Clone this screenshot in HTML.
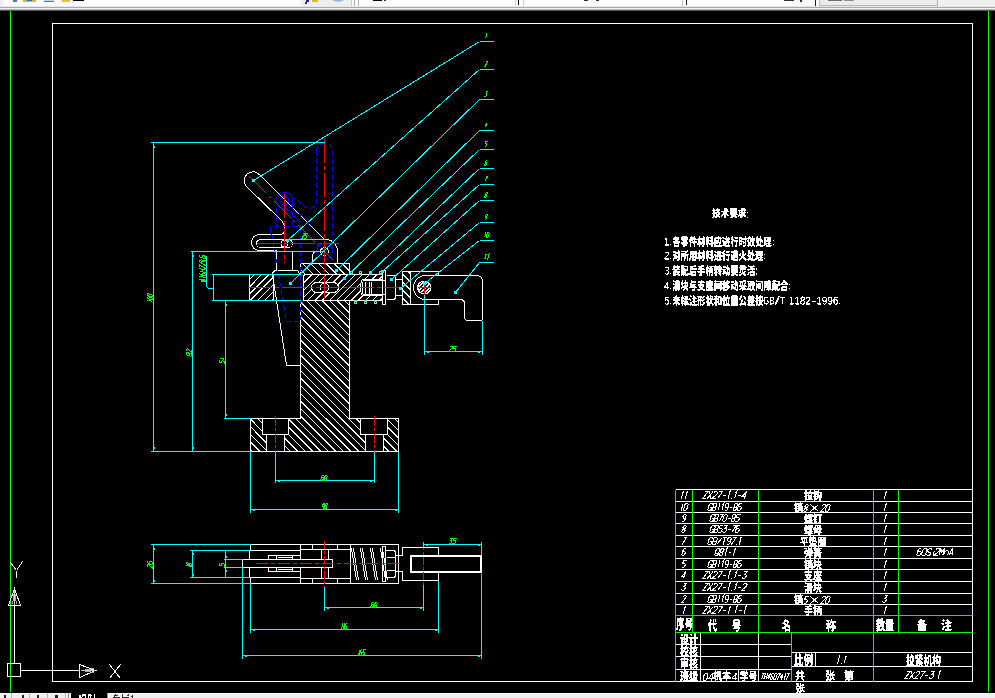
<!DOCTYPE html>
<html><head><meta charset="utf-8"><style>
html,body{margin:0;padding:0;background:#000;width:995px;height:698px;overflow:hidden;font-family:"Liberation Sans",sans-serif}
#top{position:absolute;left:0;top:0;width:995px;height:10px;background:#fdfdfd}
#bot{position:absolute;left:0;top:692px;width:995px;height:6px;background:#f0f0f0}
svg{position:absolute;left:0;top:0}
</style></head><body>
<svg width="995" height="698" viewBox="0 0 995 698" shape-rendering="crispEdges">
<polygon points="52.5,23.5 972.5,23.5 972.5,681.5 52.5,681.5" fill="none" stroke="#ffffff"/><line x1="10.5" y1="10.5" x2="10.5" y2="691.5" stroke="#00ff00"/><line x1="988.5" y1="10.5" x2="988.5" y2="691.5" stroke="#00ff00"/><polygon points="7.5,663.5 20.5,663.5 20.5,676.5 7.5,676.5" fill="none" stroke="#ffffff"/><line x1="14.5" y1="605.5" x2="14.5" y2="663.5" stroke="#ffffff"/><polygon points="8.5,605.5 20.5,605.5 14.5,588.5" fill="none" stroke="#ffffff"/><line x1="14.5" y1="590.5" x2="12.5" y2="604.5" stroke="#aaaaaa"/><line x1="14.5" y1="590.5" x2="16.5" y2="604.5" stroke="#aaaaaa"/><line x1="14.5" y1="590.5" x2="14.5" y2="604.5" stroke="#cccccc"/><line x1="20.5" y1="670.5" x2="79.5" y2="670.5" stroke="#ffffff"/><polygon points="79.5,664.5 79.5,677.5 95.5,670.5" fill="none" stroke="#ffffff"/><line x1="81.5" y1="670.5" x2="94.5" y2="668.5" stroke="#aaaaaa"/><line x1="81.5" y1="670.5" x2="94.5" y2="672.5" stroke="#aaaaaa"/><line x1="81.5" y1="670.5" x2="94.5" y2="670.5" stroke="#cccccc"/><line x1="10.5" y1="562.5" x2="16.5" y2="570.5" stroke="#ffffff"/><line x1="22.5" y1="561.5" x2="16.5" y2="570.5" stroke="#ffffff"/><line x1="16.5" y1="570.5" x2="16.5" y2="577.5" stroke="#ffffff"/><line x1="109.5" y1="664.5" x2="120.5" y2="678.5" stroke="#ffffff"/><line x1="120.5" y1="664.5" x2="109.5" y2="678.5" stroke="#ffffff"/><line x1="675.5" y1="489.5" x2="972.5" y2="489.5" stroke="#ffffff"/><line x1="675.5" y1="501.5" x2="972.5" y2="501.5" stroke="#ffffff"/><line x1="675.5" y1="512.5" x2="972.5" y2="512.5" stroke="#ffffff"/><line x1="675.5" y1="523.5" x2="972.5" y2="523.5" stroke="#ffffff"/><line x1="675.5" y1="535.5" x2="972.5" y2="535.5" stroke="#ffffff"/><line x1="675.5" y1="546.5" x2="972.5" y2="546.5" stroke="#ffffff"/><line x1="675.5" y1="558.5" x2="972.5" y2="558.5" stroke="#ffffff"/><line x1="675.5" y1="569.5" x2="972.5" y2="569.5" stroke="#ffffff"/><line x1="675.5" y1="581.5" x2="972.5" y2="581.5" stroke="#ffffff"/><line x1="675.5" y1="593.5" x2="972.5" y2="593.5" stroke="#ffffff"/><line x1="675.5" y1="604.5" x2="972.5" y2="604.5" stroke="#ffffff"/><line x1="675.5" y1="615.5" x2="972.5" y2="615.5" stroke="#00ff00"/><line x1="675.5" y1="632.5" x2="972.5" y2="632.5" stroke="#00ff00"/><line x1="675.5" y1="644.5" x2="791.5" y2="644.5" stroke="#ffffff"/><line x1="675.5" y1="656.5" x2="791.5" y2="656.5" stroke="#ffffff"/><line x1="675.5" y1="669.5" x2="791.5" y2="669.5" stroke="#ffffff"/><line x1="675.5" y1="681.5" x2="972.5" y2="681.5" stroke="#ffffff"/><line x1="791.5" y1="652.5" x2="972.5" y2="652.5" stroke="#ffffff"/><line x1="791.5" y1="666.5" x2="972.5" y2="666.5" stroke="#ffffff"/><line x1="675.5" y1="489.5" x2="675.5" y2="681.5" stroke="#00ff00"/><line x1="692.5" y1="489.5" x2="692.5" y2="632.5" stroke="#00ff00"/><line x1="758.5" y1="489.5" x2="758.5" y2="632.5" stroke="#00ff00"/><line x1="758.5" y1="632.5" x2="758.5" y2="681.5" stroke="#ffffff"/><line x1="700.5" y1="632.5" x2="700.5" y2="681.5" stroke="#ffffff"/><line x1="738.5" y1="669.5" x2="738.5" y2="681.5" stroke="#ffffff"/><line x1="791.5" y1="632.5" x2="791.5" y2="681.5" stroke="#00ff00"/><line x1="815.5" y1="652.5" x2="815.5" y2="666.5" stroke="#ffffff"/><line x1="873.5" y1="489.5" x2="873.5" y2="681.5" stroke="#00ff00"/><line x1="898.5" y1="489.5" x2="898.5" y2="632.5" stroke="#00ff00"/><rect x="0" y="0" width="995" height="6" fill="#fcfcfc"/><rect x="0" y="0" width="3" height="6" fill="#eeeeee"/><rect x="301" y="0" width="50" height="7" fill="#eeeeee"/><rect x="351" y="0" width="1" height="7" fill="#c8c8c8"/><rect x="354" y="0" width="1" height="7" fill="#b0b0b0"/><rect x="358" y="0" width="1" height="7" fill="#b0b0b0"/><rect x="820" y="0" width="117" height="5" fill="#ebebeb"/><rect x="820" y="5" width="117" height="1" fill="#b8b8b8"/><rect x="937" y="0" width="1" height="6" fill="#b0b0b0"/><rect x="819" y="0" width="1" height="6" fill="#c0c0c0"/><rect x="815" y="0" width="1" height="6" fill="#202020"/><rect x="938" y="0" width="57" height="7" fill="#f0f0f0"/><rect x="0" y="6" width="995" height="1" fill="#e4e7ec"/><rect x="0" y="7" width="995" height="1" fill="#a8a8a8"/><rect x="0" y="8" width="995" height="1" fill="#f4f4f4"/><rect x="0" y="9" width="995" height="1" fill="#b0b0b0"/><rect x="0" y="10" width="995" height="1" fill="#5a5a5a"/><rect x="13" y="0" width="4" height="2" fill="#6a7088"/><rect x="23" y="0" width="13" height="2" fill="#d8b830"/><rect x="27" y="0" width="5" height="1" fill="#3070c0"/><rect x="44" y="0" width="10" height="1" fill="#c8d4e8"/><rect x="44" y="1" width="10" height="1" fill="#5a78b0"/><rect x="62" y="0" width="8" height="2" fill="#d8c820"/><rect x="73" y="0" width="11" height="1" fill="#000000"/><rect x="306" y="0" width="3" height="2" fill="#1e2e78"/><rect x="305" y="2" width="2" height="2" fill="#1e2e78"/><rect x="312" y="0" width="6" height="2" fill="#d8c000"/><rect x="333" y="0" width="10" height="1" fill="#90b8e0"/><rect x="335" y="1" width="6" height="1" fill="#b8d0e8"/><rect x="373" y="0" width="9" height="1" fill="#000000"/><rect x="384" y="0" width="2" height="1" fill="#303030"/><rect x="518" y="0" width="1" height="5" fill="#000000"/><rect x="515" y="0" width="1" height="6" fill="#d0d0d0"/><rect x="523" y="0" width="1" height="6" fill="#d0d0d0"/><rect x="584" y="0" width="4" height="1" fill="#303030"/><rect x="596" y="0" width="3" height="1" fill="#303030"/><rect x="682" y="0" width="1" height="6" fill="#c8c8c8"/><rect x="686" y="0" width="1" height="5" fill="#202020"/><rect x="784" y="0" width="10" height="1" fill="#303030"/><rect x="800" y="0" width="2" height="2" fill="#303030"/><rect x="828" y="0" width="14" height="1" fill="#707070"/><rect x="844" y="0" width="10" height="1" fill="#909090"/><rect x="0" y="693" width="995" height="5" fill="#efefef"/><rect x="0" y="693" width="995" height="1" fill="#fafafa"/><rect x="11" y="693" width="1" height="5" fill="#b8b8b8"/><rect x="29" y="693" width="1" height="5" fill="#b8b8b8"/><rect x="47" y="693" width="1" height="5" fill="#b8b8b8"/><rect x="65" y="693" width="1" height="5" fill="#b8b8b8"/><rect x="4" y="695" width="2" height="3" fill="#202020"/><rect x="22" y="695" width="2" height="3" fill="#202020"/><rect x="37" y="695" width="2" height="3" fill="#202020"/><rect x="55" y="695" width="3" height="3" fill="#202020"/><rect x="68" y="693" width="1" height="5" fill="#909090"/><rect x="70" y="693" width="1" height="5" fill="#ffffff"/><rect x="71" y="692" width="36" height="6" fill="#000000"/><rect x="107" y="693" width="1" height="5" fill="#909090"/><rect x="108" y="693" width="1" height="5" fill="#ffffff"/><clipPath id="h105"><polygon points="250,418 398,418 398,451 250,451"/></clipPath><path clip-path="url(#h105)" d="M401.3 418L434.3 451M393.7 418L426.7 451M386.1 418L419.1 451M378.5 418L411.5 451M370.9 418L403.9 451M363.3 418L396.3 451M355.7 418L388.7 451M348.1 418L381.1 451M340.5 418L373.5 451M332.9 418L365.9 451M325.3 418L358.3 451M317.7 418L350.7 451M310.1 418L343.1 451M302.5 418L335.5 451M294.9 418L327.9 451M287.3 418L320.3 451M279.7 418L312.7 451M272.1 418L305.1 451M264.5 418L297.5 451M256.9 418L289.9 451M249.3 418L282.3 451M241.7 418L274.7 451M234.1 418L267.1 451M226.5 418L259.5 451M218.9 418L251.9 451" stroke="#ffffff" fill="none"/><clipPath id="h107"><polygon points="300,300 349,300 349,418 300,418"/></clipPath><path clip-path="url(#h107)" d="M351.7 300L469.7 418M344.1 300L462.1 418M336.5 300L454.5 418M328.9 300L446.9 418M321.3 300L439.3 418M313.7 300L431.7 418M306.1 300L424.1 418M298.5 300L416.5 418M290.9 300L408.9 418M283.3 300L401.3 418M275.7 300L393.7 418M268.1 300L386.1 418M260.5 300L378.5 418M252.9 300L370.9 418M245.3 300L363.3 418M237.7 300L355.7 418M230.1 300L348.1 418M222.5 300L340.5 418M214.9 300L332.9 418M207.3 300L325.3 418M199.7 300L317.7 418M192.1 300L310.1 418M184.5 300L302.5 418" stroke="#ffffff" fill="none"/><clipPath id="h109"><polygon points="300,263 349,263 349,274 300,274"/></clipPath><path clip-path="url(#h109)" d="M357.3 263L368.3 274M349.4 263L360.4 274M341.5 263L352.5 274M333.6 263L344.6 274M325.7 263L336.7 274M317.8 263L328.8 274M309.9 263L320.9 274M302 263L313 274M294.1 263L305.1 274" stroke="#ffffff" fill="none"/><clipPath id="h111"><polygon points="303,274 382,274 382,300 303,300"/></clipPath><path clip-path="url(#h111)" d="M298.3 274L272.3 300M305.5 274L279.5 300M312.7 274L286.7 300M319.9 274L293.9 300M327.1 274L301.1 300M334.3 274L308.3 300M341.5 274L315.5 300M348.7 274L322.7 300M355.9 274L329.9 300M363.1 274L337.1 300M370.3 274L344.3 300M377.5 274L351.5 300M384.7 274L358.7 300M391.9 274L365.9 300M399.1 274L373.1 300M406.3 274L380.3 300" stroke="#ffffff" fill="none"/><clipPath id="h113"><polygon points="249,274 273,274 273,300 249,300"/></clipPath><path clip-path="url(#h113)" d="M247.9 274L221.9 300M255.1 274L229.1 300M262.3 274L236.3 300M269.5 274L243.5 300M276.7 274L250.7 300M283.9 274L257.9 300M291.1 274L265.1 300M298.3 274L272.3 300" stroke="#ffffff" fill="none"/><clipPath id="h115"><polygon points="402,271 410,271 410,304 402,304"/></clipPath><path clip-path="url(#h115)" d="M415.5 271L448.5 304M407.5 271L440.5 304M399.5 271L432.5 304M391.5 271L424.5 304M383.5 271L416.5 304M375.5 271L408.5 304" stroke="#ffffff" fill="none"/><rect x="262" y="418" width="27" height="17" fill="#000"/><rect x="266" y="434" width="19" height="18" fill="#000"/><rect x="360" y="418" width="28" height="17" fill="#000"/><rect x="365" y="434" width="19" height="18" fill="#000"/><rect x="360" y="279" width="23" height="17" fill="#000"/><path d="M316 282H333A5 5 0 0 1 333 292H316A5 5 0 0 1 316 282Z" fill="#000" stroke="none"/><circle cx="324.5" cy="251.5" r="8" fill="none" stroke="#0000ff"/><polyline points="300.5,418.5 250.5,418.5 250.5,451.5 398.5,451.5 398.5,418.5 349.5,418.5" fill="none" stroke="#ffffff"/><polyline points="262.5,418.5 262.5,434.5 288.5,434.5 288.5,418.5" fill="none" stroke="#ffffff"/><line x1="266.5" y1="434.5" x2="266.5" y2="451.5" stroke="#ffffff"/><line x1="284.5" y1="434.5" x2="284.5" y2="451.5" stroke="#ffffff"/><polyline points="360.5,418.5 360.5,434.5 387.5,434.5 387.5,418.5" fill="none" stroke="#ffffff"/><line x1="365.5" y1="434.5" x2="365.5" y2="451.5" stroke="#ffffff"/><line x1="383.5" y1="434.5" x2="383.5" y2="451.5" stroke="#ffffff"/><line x1="300.5" y1="300.5" x2="300.5" y2="418.5" stroke="#ffffff"/><line x1="349.5" y1="300.5" x2="349.5" y2="418.5" stroke="#ffffff"/><polyline points="300.5,274.5 300.5,263.5 349.5,263.5 349.5,274.5" fill="none" stroke="#ffffff"/><line x1="303.5" y1="274.5" x2="382.5" y2="274.5" stroke="#ffffff"/><line x1="303.5" y1="300.5" x2="382.5" y2="300.5" stroke="#ffffff"/><line x1="303.5" y1="274.5" x2="303.5" y2="300.5" stroke="#ffffff"/><path d="M382.5 279.5H363.5Q360.5 279.5 360.5 287.5Q360.5 295.5 363.5 295.5H382.5" fill="none" stroke="#ffffff"/><line x1="362.5" y1="280.5" x2="385.5" y2="280.5" stroke="#ffffff"/><line x1="362.5" y1="294.5" x2="385.5" y2="294.5" stroke="#ffffff"/><line x1="362.5" y1="281.5" x2="362.5" y2="293.5" stroke="#ffffff"/><line x1="365.5" y1="281.5" x2="365.5" y2="293.5" stroke="#ffffff"/><line x1="369.5" y1="281.5" x2="369.5" y2="293.5" stroke="#ffffff"/><line x1="371.5" y1="281.5" x2="371.5" y2="293.5" stroke="#ffffff"/><path d="M316.5 282.5H333.5A5 5 0 0 1 333.5 292.5H316.5A5 5 0 0 1 316.5 282.5Z" fill="none" stroke="#ffffff"/><circle cx="324.5" cy="287.5" r="4.5" fill="none" stroke="#ffffff"/><line x1="249.5" y1="274.5" x2="249.5" y2="300.5" stroke="#ffffff"/><line x1="273.5" y1="274.5" x2="273.5" y2="300.5" stroke="#ffffff"/><line x1="249.5" y1="274.5" x2="273.5" y2="274.5" stroke="#ffffff"/><line x1="249.5" y1="300.5" x2="273.5" y2="300.5" stroke="#ffffff"/><polygon points="382.5,270.5 385.5,270.5 385.5,304.5 382.5,304.5" fill="none" stroke="#ffffff"/><path d="M386.5 275.5H393.5Q395.5 275.5 395.5 278.5V296.5Q395.5 299.5 393.5 299.5H386.5" fill="none" stroke="#ffffff"/><polyline points="395.5,279.5 402.5,279.5" fill="none" stroke="#ffffff"/><polyline points="395.5,295.5 402.5,295.5" fill="none" stroke="#ffffff"/><polyline points="438.5,275.5 438.5,271.5 402.5,271.5 402.5,304.5 438.5,304.5 438.5,299.5" fill="none" stroke="#ffffff"/><line x1="410.5" y1="271.5" x2="410.5" y2="304.5" stroke="#ffffff"/><path d="M438.5 275.5H476.5Q482.5 275.5 482.5 281.5V319.5Q482.5 320.5 480.5 320.5H468.5Q464.5 320.5 464.5 316.5V303.5Q464.5 299.5 460.5 299.5H425.5A12 12 0 0 1 425.5 275.5H438.5" fill="none" stroke="#ffffff"/><circle cx="424.5" cy="287.5" r="6.5" fill="none" stroke="#ffffff"/><clipPath id="h158"><polygon points="430,287 429.638,289.052 428.596,290.857 427,292.196 425.042,292.909 422.958,292.909 421,292.196 419.404,290.857 418.362,289.052 418,287 418.362,284.948 419.404,283.143 421,281.804 422.958,281.091 425.042,281.091 427,281.804 428.596,283.143 429.638,284.948"/></clipPath><path clip-path="url(#h158)" d="M416.409 281.091L404.591 292.909M420.409 281.091L408.591 292.909M424.409 281.091L412.591 292.909M428.409 281.091L416.591 292.909M432.409 281.091L420.591 292.909M436.409 281.091L424.591 292.909M440.409 281.091L428.591 292.909" stroke="#ffffff" fill="none"/><path d="M417.5 287.5A6.5 6.5 0 1 0 430.5 287.5A6.5 6.5 0 1 0 417.5 287.5" fill="none" stroke="#ffffff"/><path d="M272.5 274.5Q272.5 270.5 276.5 270.5H296.5Q298.5 270.5 299.5 274.5" fill="none" stroke="#ffffff"/><polyline points="272.5,274.5 286.5,365.5 300.5,365.5" fill="none" stroke="#ffffff"/><line x1="276.5" y1="251.5" x2="276.5" y2="270.5" stroke="#ffffff"/><line x1="292.5" y1="251.5" x2="292.5" y2="270.5" stroke="#ffffff"/><path d="M284.5 229.5Q284.5 234.5 279.5 234.5H259.5A8 8 0 0 0 259.5 250.5H276.5" fill="none" stroke="#ffffff"/><path d="M260.5 239.5H288.5A4 4 0 0 1 288.5 247.5H260.5A4 4 0 0 1 260.5 239.5Z" fill="none" stroke="#ffffff"/><circle cx="284.5" cy="243.5" r="3.5" fill="none" stroke="#ffffff"/><path d="M246.8 186.8A8.7 8.7 0 1 1 259.2 174.4L324.5 239.5A12 12 0 0 1 337.5 251.5V263.5" fill="none" stroke="#ffffff"/><polyline points="246.8,186.8 282.5,221.5 284.5,226.5 284.5,229.5" fill="none" stroke="#ffffff"/><path d="M312.5 263.5V256.5Q312.5 251.5 316.5 251.5" fill="none" stroke="#ffffff"/><circle cx="324.5" cy="251.5" r="4" fill="none" stroke="#ffffff"/><circle cx="284.5" cy="200.5" r="8.5" fill="none" stroke="#0000ff"/><circle cx="284.5" cy="200.5" r="4.5" fill="none" stroke="#0000ff"/><polyline points="270.5,226.5 286.5,321.5 300.5,321.5" fill="none" stroke="#0000ff" stroke-dasharray="5,3"/><line x1="300.5" y1="226.5" x2="300.5" y2="321.5" stroke="#0000ff" stroke-dasharray="5,3"/><line x1="276.5" y1="207.5" x2="276.5" y2="226.5" stroke="#0000ff" stroke-dasharray="5,3"/><line x1="292.5" y1="203.5" x2="292.5" y2="226.5" stroke="#0000ff" stroke-dasharray="5,3"/><polyline points="270.5,232.5 270.5,226.5 297.5,226.5 297.5,230.5" fill="none" stroke="#0000ff" stroke-dasharray="6,3"/><polyline points="293.5,210.5 308.5,220.5 308.5,225.5" fill="none" stroke="#0000ff" stroke-dasharray="5,2"/><line x1="287.5" y1="209.5" x2="303.5" y2="226.5" stroke="#0000ff" stroke-dasharray="5,2"/><path d="M316.5 150.5Q316.5 143.5 324.5 143.5Q332.5 143.5 332.5 150.5V251.5" fill="none" stroke="#0000ff" stroke-dasharray="5,3"/><path d="M332.5 251.5A8 8 0 0 1 316.5 251.5" fill="none" stroke="#0000ff"/><path d="M316.5 150.5V200.5Q316.5 208.5 307.5 208.5L294.5 198.5" fill="none" stroke="#0000ff" stroke-dasharray="5,3"/><line x1="324.5" y1="138.5" x2="324.5" y2="300.5" stroke="#ff0000" stroke-dasharray="24,3,4,3"/><line x1="284.5" y1="193.5" x2="284.5" y2="262.5" stroke="#ff0000" stroke-dasharray="24,3,4,3"/><line x1="249.5" y1="176.5" x2="333.5" y2="260.5" stroke="#ff0000" stroke-dasharray="24,3,4,3"/><line x1="256.5" y1="243.5" x2="338.5" y2="243.5" stroke="#ff0000" stroke-dasharray="24,3,4,3"/><line x1="247.5" y1="287.5" x2="402.5" y2="287.5" stroke="#ff0000" stroke-dasharray="24,3,4,3"/><line x1="417.5" y1="287.5" x2="431.5" y2="287.5" stroke="#ff0000"/><line x1="424.5" y1="280.5" x2="424.5" y2="294.5" stroke="#ff0000"/><line x1="275.5" y1="415.5" x2="275.5" y2="451.5" stroke="#ff0000" stroke-dasharray="10,2,3,2"/><line x1="374.5" y1="415.5" x2="374.5" y2="451.5" stroke="#ff0000" stroke-dasharray="10,2,3,2"/><rect x="350" y="271" width="3" height="4" fill="#80e0a0"/><rect x="351" y="272" width="1" height="1" fill="#000"/><rect x="359" y="271" width="3" height="4" fill="#80e0a0"/><rect x="360" y="272" width="1" height="1" fill="#000"/><rect x="369" y="271" width="3" height="4" fill="#80e0a0"/><rect x="370" y="272" width="1" height="1" fill="#000"/><rect x="379" y="271" width="3" height="4" fill="#80e0a0"/><rect x="380" y="272" width="1" height="1" fill="#000"/><rect x="354" y="300" width="3" height="4" fill="#80e0a0"/><rect x="355" y="302" width="1" height="1" fill="#000"/><rect x="364" y="300" width="3" height="4" fill="#80e0a0"/><rect x="365" y="302" width="1" height="1" fill="#000"/><rect x="374" y="300" width="3" height="4" fill="#80e0a0"/><rect x="375" y="302" width="1" height="1" fill="#000"/><line x1="150.5" y1="142.5" x2="324.5" y2="142.5" stroke="#00ffff"/><line x1="153.5" y1="142.5" x2="153.5" y2="451.5" stroke="#00ffff"/><rect x="153" y="146" width="2" height="2" fill="#00ffff"/><rect x="153" y="447" width="2" height="2" fill="#00ffff"/><line x1="150.5" y1="451.5" x2="250.5" y2="451.5" stroke="#00ffff"/><line x1="190.5" y1="251.5" x2="324.5" y2="251.5" stroke="#00ffff"/><line x1="192.5" y1="251.5" x2="192.5" y2="451.5" stroke="#00ffff"/><rect x="192" y="255" width="2" height="2" fill="#00ffff"/><rect x="192" y="447" width="2" height="2" fill="#00ffff"/><line x1="211.5" y1="274.5" x2="300.5" y2="274.5" stroke="#00ffff"/><line x1="211.5" y1="300.5" x2="300.5" y2="300.5" stroke="#00ffff"/><line x1="213.5" y1="274.5" x2="213.5" y2="300.5" stroke="#00ffff"/><line x1="206.5" y1="255.5" x2="206.5" y2="286.5" stroke="#00ffff"/><polyline points="206.5,286.5 208.5,288.5 213.5,288.5" fill="none" stroke="#00ffff"/><line x1="225.5" y1="300.5" x2="225.5" y2="418.5" stroke="#00ffff"/><rect x="225" y="304" width="2" height="2" fill="#00ffff"/><rect x="225" y="414" width="2" height="2" fill="#00ffff"/><line x1="223.5" y1="418.5" x2="250.5" y2="418.5" stroke="#00ffff"/><line x1="275.5" y1="451.5" x2="275.5" y2="482.5" stroke="#00ffff"/><line x1="374.5" y1="451.5" x2="374.5" y2="482.5" stroke="#00ffff"/><line x1="275.5" y1="480.5" x2="374.5" y2="480.5" stroke="#00ffff"/><rect x="278" y="480" width="2" height="2" fill="#00ffff"/><rect x="370" y="480" width="2" height="2" fill="#00ffff"/><line x1="250.5" y1="451.5" x2="250.5" y2="512.5" stroke="#00ffff"/><line x1="398.5" y1="451.5" x2="398.5" y2="512.5" stroke="#00ffff"/><line x1="250.5" y1="509.5" x2="398.5" y2="509.5" stroke="#00ffff"/><rect x="253" y="509" width="2" height="2" fill="#00ffff"/><rect x="395" y="509" width="2" height="2" fill="#00ffff"/><line x1="424.5" y1="294.5" x2="424.5" y2="354.5" stroke="#00ffff"/><line x1="482.5" y1="320.5" x2="482.5" y2="354.5" stroke="#00ffff"/><line x1="424.5" y1="351.5" x2="482.5" y2="351.5" stroke="#00ffff"/><rect x="427" y="351" width="2" height="2" fill="#00ffff"/><rect x="478" y="351" width="2" height="2" fill="#00ffff"/><line x1="284.5" y1="239.5" x2="324.5" y2="239.5" stroke="#00ffff"/><line x1="479.5" y1="41.5" x2="493.5" y2="41.5" stroke="#00ffff"/><line x1="479.5" y1="41.5" x2="253.5" y2="180.5" stroke="#00ffff"/><rect x="252" y="179" width="3" height="3" fill="#00ffff"/><line x1="479.5" y1="69.5" x2="493.5" y2="69.5" stroke="#00ffff"/><line x1="479.5" y1="69.5" x2="287.5" y2="240.5" stroke="#00ffff"/><rect x="286" y="239" width="3" height="3" fill="#00ffff"/><line x1="479.5" y1="99.5" x2="493.5" y2="99.5" stroke="#00ffff"/><line x1="479.5" y1="99.5" x2="290.5" y2="283.5" stroke="#00ffff"/><rect x="289" y="282" width="3" height="3" fill="#00ffff"/><line x1="479.5" y1="130.5" x2="493.5" y2="130.5" stroke="#00ffff"/><line x1="479.5" y1="130.5" x2="336.5" y2="270.5" stroke="#00ffff"/><rect x="335" y="269" width="3" height="3" fill="#00ffff"/><line x1="479.5" y1="149.5" x2="493.5" y2="149.5" stroke="#00ffff"/><line x1="479.5" y1="149.5" x2="344.5" y2="278.5" stroke="#00ffff"/><rect x="343" y="277" width="3" height="3" fill="#00ffff"/><line x1="479.5" y1="168.5" x2="493.5" y2="168.5" stroke="#00ffff"/><line x1="479.5" y1="168.5" x2="370.5" y2="272.5" stroke="#00ffff"/><rect x="369" y="271" width="3" height="3" fill="#00ffff"/><line x1="479.5" y1="184.5" x2="493.5" y2="184.5" stroke="#00ffff"/><line x1="479.5" y1="184.5" x2="382.5" y2="271.5" stroke="#00ffff"/><rect x="381" y="270" width="3" height="3" fill="#00ffff"/><line x1="479.5" y1="200.5" x2="493.5" y2="200.5" stroke="#00ffff"/><line x1="479.5" y1="200.5" x2="391.5" y2="279.5" stroke="#00ffff"/><rect x="390" y="278" width="3" height="3" fill="#00ffff"/><line x1="479.5" y1="222.5" x2="493.5" y2="222.5" stroke="#00ffff"/><line x1="479.5" y1="222.5" x2="400.5" y2="288.5" stroke="#00ffff"/><rect x="399" y="287" width="3" height="3" fill="#00ffff"/><line x1="479.5" y1="240.5" x2="493.5" y2="240.5" stroke="#00ffff"/><line x1="479.5" y1="240.5" x2="424.5" y2="283.5" stroke="#00ffff"/><rect x="423" y="282" width="3" height="3" fill="#00ffff"/><line x1="479.5" y1="262.5" x2="493.5" y2="262.5" stroke="#00ffff"/><line x1="479.5" y1="262.5" x2="455.5" y2="292.5" stroke="#00ffff"/><rect x="454" y="291" width="3" height="3" fill="#00ffff"/><line x1="250.5" y1="544.5" x2="398.5" y2="544.5" stroke="#ffffff"/><line x1="250.5" y1="583.5" x2="398.5" y2="583.5" stroke="#ffffff"/><line x1="398.5" y1="544.5" x2="398.5" y2="583.5" stroke="#ffffff"/><line x1="250.5" y1="544.5" x2="250.5" y2="550.5" stroke="#ffffff"/><line x1="250.5" y1="577.5" x2="250.5" y2="583.5" stroke="#ffffff"/><line x1="249.5" y1="550.5" x2="300.5" y2="550.5" stroke="#ffffff"/><line x1="249.5" y1="577.5" x2="300.5" y2="577.5" stroke="#ffffff"/><line x1="249.5" y1="550.5" x2="249.5" y2="559.5" stroke="#ffffff"/><line x1="249.5" y1="567.5" x2="249.5" y2="577.5" stroke="#ffffff"/><polygon points="242.5,559.5 332.5,559.5 332.5,567.5 242.5,567.5" fill="none" stroke="#ffffff"/><line x1="300.5" y1="544.5" x2="300.5" y2="559.5" stroke="#ffffff"/><line x1="300.5" y1="567.5" x2="300.5" y2="583.5" stroke="#ffffff"/><line x1="300.5" y1="549.5" x2="349.5" y2="549.5" stroke="#ffffff"/><line x1="300.5" y1="578.5" x2="349.5" y2="578.5" stroke="#ffffff"/><line x1="312.5" y1="544.5" x2="312.5" y2="549.5" stroke="#ffffff"/><line x1="312.5" y1="578.5" x2="312.5" y2="583.5" stroke="#ffffff"/><line x1="337.5" y1="544.5" x2="337.5" y2="549.5" stroke="#ffffff"/><line x1="337.5" y1="578.5" x2="337.5" y2="583.5" stroke="#ffffff"/><line x1="321.5" y1="549.5" x2="321.5" y2="559.5" stroke="#ffffff"/><line x1="328.5" y1="549.5" x2="328.5" y2="559.5" stroke="#ffffff"/><line x1="321.5" y1="567.5" x2="321.5" y2="578.5" stroke="#ffffff"/><line x1="328.5" y1="567.5" x2="328.5" y2="578.5" stroke="#ffffff"/><polyline points="268.5,559.5 268.5,555.5 300.5,555.5" fill="none" stroke="#ffffff"/><polyline points="268.5,567.5 268.5,571.5 300.5,571.5" fill="none" stroke="#ffffff"/><line x1="276.5" y1="555.5" x2="276.5" y2="559.5" stroke="#ffffff"/><line x1="292.5" y1="555.5" x2="292.5" y2="559.5" stroke="#ffffff"/><line x1="276.5" y1="567.5" x2="276.5" y2="571.5" stroke="#ffffff"/><line x1="292.5" y1="567.5" x2="292.5" y2="571.5" stroke="#ffffff"/><line x1="277.5" y1="557.5" x2="291.5" y2="557.5" stroke="#ffffff"/><line x1="277.5" y1="569.5" x2="291.5" y2="569.5" stroke="#ffffff"/><line x1="350.5" y1="544.5" x2="350.5" y2="583.5" stroke="#ffffff"/><line x1="351.5" y1="548.5" x2="356.5" y2="580.5" stroke="#ffffff"/><line x1="353.5" y1="548.5" x2="358.5" y2="580.5" stroke="#ffffff"/><line x1="360.5" y1="548.5" x2="365.5" y2="580.5" stroke="#ffffff"/><line x1="362.5" y1="548.5" x2="367.5" y2="580.5" stroke="#ffffff"/><line x1="370.5" y1="548.5" x2="375.5" y2="580.5" stroke="#ffffff"/><line x1="372.5" y1="548.5" x2="377.5" y2="580.5" stroke="#ffffff"/><line x1="380.5" y1="548.5" x2="385.5" y2="580.5" stroke="#ffffff"/><line x1="382.5" y1="548.5" x2="387.5" y2="580.5" stroke="#ffffff"/><polygon points="382.5,546.5 385.5,546.5 385.5,581.5 382.5,581.5" fill="none" stroke="#ffffff"/><path d="M385.5 550.5H393.5Q395.5 550.5 395.5 553.5V574.5Q395.5 577.5 393.5 577.5H385.5" fill="none" stroke="#ffffff"/><line x1="386.5" y1="557.5" x2="395.5" y2="557.5" stroke="#ffffff"/><line x1="386.5" y1="570.5" x2="395.5" y2="570.5" stroke="#ffffff"/><polyline points="395.5,555.5 402.5,555.5" fill="none" stroke="#ffffff"/><polyline points="395.5,571.5 402.5,571.5" fill="none" stroke="#ffffff"/><polyline points="402.5,555.5 402.5,547.5 438.5,547.5 438.5,555.5" fill="none" stroke="#ffffff"/><polyline points="402.5,571.5 402.5,580.5 438.5,580.5 438.5,572.5" fill="none" stroke="#ffffff"/><polygon points="410.5,555.5 481.5,555.5 481.5,572.5 410.5,572.5" fill="none" stroke="#ffffff"/><polygon points="411.5,556.5 480.5,556.5 480.5,571.5 411.5,571.5" fill="none" stroke="#ffffff"/><line x1="324.5" y1="540.5" x2="324.5" y2="586.5" stroke="#ff0000" stroke-dasharray="8,2,3,2"/><line x1="423.5" y1="541.5" x2="423.5" y2="584.5" stroke="#ff0000" stroke-dasharray="8,2,3,2"/><line x1="255.5" y1="563.5" x2="400.5" y2="563.5" stroke="#ff0000" stroke-dasharray="12,3,4,3"/><line x1="150.5" y1="544.5" x2="250.5" y2="544.5" stroke="#00ffff"/><line x1="150.5" y1="583.5" x2="250.5" y2="583.5" stroke="#00ffff"/><line x1="153.5" y1="544.5" x2="153.5" y2="583.5" stroke="#00ffff"/><rect x="153" y="548" width="2" height="2" fill="#00ffff"/><rect x="153" y="580" width="2" height="2" fill="#00ffff"/><line x1="189.5" y1="550.5" x2="249.5" y2="550.5" stroke="#00ffff"/><line x1="189.5" y1="577.5" x2="249.5" y2="577.5" stroke="#00ffff"/><line x1="192.5" y1="550.5" x2="192.5" y2="577.5" stroke="#00ffff"/><rect x="192" y="553" width="2" height="2" fill="#00ffff"/><rect x="192" y="574" width="2" height="2" fill="#00ffff"/><line x1="223.5" y1="559.5" x2="242.5" y2="559.5" stroke="#00ffff"/><line x1="223.5" y1="567.5" x2="242.5" y2="567.5" stroke="#00ffff"/><line x1="225.5" y1="550.5" x2="225.5" y2="577.5" stroke="#00ffff"/><rect x="225" y="556" width="2" height="2" fill="#00ffff"/><rect x="225" y="570" width="2" height="2" fill="#00ffff"/><line x1="250.5" y1="583.5" x2="250.5" y2="632.5" stroke="#00ffff"/><line x1="242.5" y1="567.5" x2="242.5" y2="658.5" stroke="#00ffff"/><line x1="324.5" y1="586.5" x2="324.5" y2="610.5" stroke="#00ffff"/><line x1="423.5" y1="584.5" x2="423.5" y2="610.5" stroke="#00ffff"/><line x1="324.5" y1="607.5" x2="423.5" y2="607.5" stroke="#00ffff"/><rect x="327" y="607" width="2" height="2" fill="#00ffff"/><rect x="420" y="607" width="2" height="2" fill="#00ffff"/><line x1="438.5" y1="580.5" x2="438.5" y2="632.5" stroke="#00ffff"/><line x1="250.5" y1="629.5" x2="438.5" y2="629.5" stroke="#00ffff"/><rect x="253" y="629" width="2" height="2" fill="#00ffff"/><rect x="435" y="629" width="2" height="2" fill="#00ffff"/><line x1="481.5" y1="573.5" x2="481.5" y2="658.5" stroke="#00ffff"/><line x1="481.5" y1="541.5" x2="481.5" y2="554.5" stroke="#00ffff"/><line x1="242.5" y1="655.5" x2="481.5" y2="655.5" stroke="#00ffff"/><rect x="245" y="655" width="2" height="2" fill="#00ffff"/><rect x="478" y="655" width="2" height="2" fill="#00ffff"/><line x1="423.5" y1="541.5" x2="423.5" y2="547.5" stroke="#00ffff"/><line x1="423.5" y1="544.5" x2="481.5" y2="544.5" stroke="#00ffff"/><rect x="426" y="544" width="2" height="2" fill="#00ffff"/><rect x="478" y="544" width="2" height="2" fill="#00ffff"/><path d="M148.33 300.73L147.50 299.96L152.50 301.46M147.50 298.14L147.50 297.10L148.33 296.83L151.67 297.83L152.50 298.60L152.50 299.64L151.67 299.91L148.33 298.91L147.50 298.14M147.50 295.06L147.50 294.02L148.33 293.75L151.67 294.75L152.50 295.52L152.50 296.56L151.67 296.83L148.33 295.83L147.50 295.06" fill="none" stroke="#00ff00"/><path d="M186.50 354.31L186.50 352.94L187.33 352.50L188.17 352.75L189.00 353.69L189.00 355.06L188.17 355.50L187.33 355.25L186.50 354.31M189.00 355.06L189.00 353.69L189.83 353.25L190.67 353.50L191.50 354.44L191.50 355.81L190.67 356.25L189.83 356.00L189.00 355.06M187.33 351.50L186.50 350.56L186.50 349.19L187.33 348.75L188.17 349.00L191.50 352.75L191.50 350.00" fill="none" stroke="#00ff00"/><path d="M219.50 359.88L219.50 362.00L221.58 362.62L221.58 361.04L222.42 360.76L223.67 361.13L224.50 361.91L224.50 363.50M220.33 358.60L219.50 357.82L224.50 359.32" fill="none" stroke="#00ff00"/><path d="M201.00 280.53L201.00 279.29L202.00 278.96L204.00 279.56L205.00 280.49L205.00 281.73L204.00 282.05L202.00 281.45L201.00 280.53M199.50 279.08L205.50 281.63M200.50 276.89L199.50 275.97L205.50 277.77M199.50 272.55L199.50 273.80L200.50 274.72L204.50 275.92L205.50 275.60L205.50 274.35L204.50 273.43L203.00 272.98L202.00 273.30L202.00 275.17M199.50 270.93L205.50 272.73M199.50 268.44L205.50 270.24M202.50 271.83L202.50 269.34M199.50 267.44L199.50 264.96L205.50 268.62M199.50 261.47L205.50 265.76M199.50 260.47L205.50 262.27M201.50 259.21L204.00 261.82M203.10 260.93L205.50 260.41M199.50 255.12L199.50 256.36L200.50 257.29L204.50 258.49L205.50 258.16L205.50 256.92L204.50 256.00L203.00 255.55L202.00 255.87L202.00 257.74" fill="none" stroke="#00ff00"/><path d="M323.69 475.50L322.56 475.50L321.75 476.33L320.75 479.67L321.06 480.50L322.19 480.50L323.00 479.67L323.37 478.42L323.06 477.58L321.38 477.58M325.81 475.50L326.94 475.50L327.25 476.33L327.00 477.17L326.19 478.00L325.06 478.00L324.75 477.17L325.00 476.33L325.81 475.50M325.06 478.00L326.19 478.00L326.50 478.83L326.25 479.67L325.44 480.50L324.31 480.50L324.00 479.67L324.25 478.83L325.06 478.00" fill="none" stroke="#00ff00"/><path d="M324.00 506.50L322.80 506.50L322.70 505.50L323.00 504.50L323.70 503.50L324.50 503.50L324.60 504.50L323.40 508.50L322.70 509.50L321.90 509.50M326.30 503.50L327.10 503.50L327.20 504.50L326.00 508.50L325.30 509.50L324.50 509.50L324.40 508.50L325.60 504.50L326.30 503.50" fill="none" stroke="#00ff00"/><path d="M449.75 347.33L450.69 346.50L452.06 346.50L452.50 347.33L452.25 348.17L448.50 351.50L451.25 351.50M456.50 346.50L453.75 346.50L453.12 348.58L455.19 348.58L455.62 349.42L455.25 350.67L454.31 351.50L452.25 351.50" fill="none" stroke="#00ff00"/><path d="M302.75 234.33L303.44 233.50L304.31 233.50L304.50 234.33L304.25 235.17L301.50 238.50L303.25 238.50M307.50 233.50L305.75 233.50L305.12 235.58L306.44 235.58L306.62 236.42L306.25 237.67L305.56 238.50L304.25 238.50" fill="none" stroke="#00ff00"/><path d="M148.33 567.25L147.50 566.31L147.50 564.94L148.33 564.50L149.17 564.75L152.50 568.50L152.50 565.75M147.50 561.19L147.50 562.56L148.33 563.50L151.67 564.50L152.50 564.06L152.50 562.69L151.67 561.75L150.42 561.38L149.58 561.81L149.58 563.88" fill="none" stroke="#00ff00"/><path d="M187.33 565.84L186.50 565.18L191.50 566.68M186.50 563.74L186.50 562.91L187.33 562.75L188.17 563.00L189.00 563.66L189.00 564.49L188.17 564.65L187.33 564.40L186.50 563.74M189.00 564.49L189.00 563.66L189.83 563.50L190.67 563.75L191.50 564.41L191.50 565.24L190.67 565.40L189.83 565.15L189.00 564.49" fill="none" stroke="#00ff00"/><path d="M219.50 562.50L219.50 565.00L221.58 565.62L221.58 563.75L222.42 563.38L223.67 563.75L224.50 564.63L224.50 566.50" fill="none" stroke="#00ff00"/><path d="M450.00 538.50L452.75 538.50L450.75 540.58L451.44 540.58L451.87 541.42L451.50 542.67L450.56 543.50L449.19 543.50L448.75 542.67M456.50 538.50L453.75 538.50L453.12 540.58L455.19 540.58L455.62 541.42L455.25 542.67L454.31 543.50L452.25 543.50" fill="none" stroke="#00ff00"/><path d="M373.69 602.50L372.56 602.50L371.75 603.33L370.75 606.67L371.06 607.50L372.19 607.50L373.00 606.67L373.37 605.42L373.06 604.58L371.38 604.58M375.81 602.50L376.94 602.50L377.25 603.33L377.00 604.17L376.19 605.00L375.06 605.00L374.75 604.17L375.00 603.33L375.81 602.50M375.06 605.00L376.19 605.00L376.50 605.83L376.25 606.67L375.44 607.50L374.31 607.50L374.00 606.67L374.25 605.83L375.06 605.00" fill="none" stroke="#00ff00"/><path d="M342.40 624.50L343.10 623.50L341.30 629.50M344.20 624.50L344.90 623.50L343.10 629.50M347.10 623.50L346.30 623.50L345.60 624.50L344.40 628.50L344.50 629.50L345.30 629.50L346.00 628.50L346.45 627.00L346.35 626.00L345.15 626.00" fill="none" stroke="#00ff00"/><path d="M359.42 650.50L360.13 649.50L358.33 655.50M362.42 649.50L361.59 649.50L360.87 650.50L359.67 654.50L359.79 655.50L360.62 655.50L361.34 654.50L361.79 653.00L361.67 652.00L360.42 652.00M365.50 649.50L363.84 649.50L363.09 652.00L364.33 652.00L364.45 653.00L364.00 654.50L363.28 655.50L362.04 655.50" fill="none" stroke="#00ff00"/><path d="M486.31 34.33L487.11 33.50L485.61 38.50" fill="none" stroke="#00ff00"/><path d="M485.75 62.33L486.37 61.50L487.12 61.50L487.25 62.33L487.00 63.17L484.50 66.50L486.00 66.50" fill="none" stroke="#00ff00"/><path d="M486.00 91.50L487.50 91.50L486.12 93.58L486.50 93.58L486.62 94.42L486.25 95.67L485.62 96.50L484.87 96.50L484.75 95.67" fill="none" stroke="#00ff00"/><path d="M485.62 127.50L487.12 122.50L485.00 125.83L486.50 125.83" fill="none" stroke="#00ff00"/><path d="M487.50 141.50L486.00 141.50L485.38 143.58L486.50 143.58L486.62 144.42L486.25 145.67L485.62 146.50L484.50 146.50" fill="none" stroke="#00ff00"/><path d="M487.12 160.50L486.37 160.50L485.75 161.33L484.75 164.67L484.87 165.50L485.62 165.50L486.25 164.67L486.62 163.42L486.50 162.58L485.38 162.58" fill="none" stroke="#00ff00"/><path d="M486.00 176.50L487.50 176.50L484.87 181.50" fill="none" stroke="#00ff00"/><path d="M486.37 192.50L487.12 192.50L487.25 193.33L487.00 194.17L486.37 195.00L485.62 195.00L485.50 194.17L485.75 193.33L486.37 192.50M485.62 195.00L486.37 195.00L486.50 195.83L486.25 196.67L485.62 197.50L484.87 197.50L484.75 196.67L485.00 195.83L485.62 195.00" fill="none" stroke="#00ff00"/><path d="M486.75 217.00L485.62 217.00L485.50 216.17L485.75 215.33L486.37 214.50L487.12 214.50L487.25 215.33L486.25 218.67L485.62 219.50L484.87 219.50" fill="none" stroke="#00ff00"/><path d="M485.28 233.33L486.06 232.50L484.56 237.50M487.91 232.50L488.97 232.50L489.25 233.33L488.25 236.67L487.47 237.50L486.41 237.50L486.13 236.67L487.13 233.33L487.91 232.50" fill="none" stroke="#00ff00"/><path d="M485.36 255.33L486.22 254.50L484.72 259.50M488.11 255.33L488.97 254.50L487.47 259.50" fill="none" stroke="#00ff00"/><path d="M682.13 492.67L683.36 491.50L681.26 498.50M686.08 492.67L687.31 491.50L685.21 498.50" fill="none" stroke="#ffffff"/><path d="M704.60 491.50L708.34 491.50L702.50 498.50L706.24 498.50M709.34 491.50L710.97 498.50M713.07 491.50L707.24 498.50M713.72 492.67L715.01 491.50L716.88 491.50L717.46 492.67L717.11 493.83L711.97 498.50L715.71 498.50M718.81 491.50L722.55 491.50L717.64 498.50M722.96 495.00L725.77 495.00M728.87 492.67L730.15 491.50L728.05 498.50M731.46 498.03L731.32 498.50M735.41 492.67L736.69 491.50L734.59 498.50M738.44 495.00L741.25 495.00M744.47 498.50L746.57 491.50L742.36 496.17L746.10 496.17" fill="none" stroke="#ffffff"/><path d="M885.12 492.67L886.33 491.50L884.23 498.50" fill="none" stroke="#ffffff"/><path d="M682.06 504.67L683.22 503.50L681.12 510.50M686.06 503.50L687.69 503.50L688.15 504.67L686.75 509.33L685.59 510.50L683.96 510.50L683.50 509.33L684.90 504.67L686.06 503.50" fill="none" stroke="#ffffff"/><path d="M712.63 504.67L712.14 503.50L710.45 503.50L709.25 504.67L707.85 509.33L708.35 510.50L710.04 510.50L711.23 509.33L711.93 507.00L710.24 507.00M712.93 507.00L715.47 507.00L716.66 505.83L717.01 504.67L716.52 503.50L713.98 503.50L711.88 510.50L714.42 510.50L715.61 509.33L715.96 508.17L715.47 507.00M718.86 504.67L720.05 503.50L717.95 510.50M722.66 504.67L723.86 503.50L721.76 510.50M728.30 507.00L725.77 507.00L725.27 505.83L725.62 504.67L726.82 503.50L728.51 503.50L729.00 504.67L727.60 509.33L726.41 510.50L724.72 510.50M729.73 507.00L732.26 507.00M735.58 503.50L737.27 503.50L737.77 504.67L737.42 505.83L736.22 507.00L734.53 507.00L734.04 505.83L734.39 504.67L735.58 503.50M734.53 507.00L736.22 507.00L736.72 508.17L736.37 509.33L735.17 510.50L733.48 510.50L732.99 509.33L733.34 508.17L734.53 507.00M741.65 503.50L739.96 503.50L738.77 504.67L737.37 509.33L737.86 510.50L739.55 510.50L740.75 509.33L741.27 507.58L740.78 506.42L738.24 506.42" fill="none" stroke="#ffffff"/><path d="M806.32 504.50L807.77 504.50L808.15 505.67L807.80 506.83L806.72 508.00L805.27 508.00L804.90 506.83L805.25 505.67L806.32 504.50M805.27 508.00L806.72 508.00L807.10 509.17L806.75 510.33L805.67 511.50L804.22 511.50L803.85 510.33L804.20 509.17L805.27 508.00" fill="none" stroke="#ffffff"/><line x1="810.5" y1="504.5" x2="818.5" y2="511.5" stroke="#ffffff"/><line x1="818.5" y1="504.5" x2="810.5" y2="511.5" stroke="#ffffff"/><path d="M822.25 505.67L823.46 504.50L825.19 504.50L825.70 505.67L825.35 506.83L820.50 511.50L823.95 511.50M827.91 504.50L829.64 504.50L830.15 505.67L828.75 510.33L827.54 511.50L825.81 511.50L825.30 510.33L826.70 505.67L827.91 504.50" fill="none" stroke="#ffffff"/><path d="M885.12 504.67L886.33 503.50L884.23 510.50" fill="none" stroke="#ffffff"/><path d="M685.45 518.00L683.27 518.00L682.90 516.83L683.25 515.67L684.32 514.50L685.77 514.50L686.15 515.67L684.75 520.33L683.67 521.50L682.22 521.50" fill="none" stroke="#ffffff"/><path d="M714.52 515.67L714.05 514.50L712.42 514.50L711.25 515.67L709.85 520.33L710.32 521.50L711.95 521.50L713.12 520.33L713.82 518.00L712.19 518.00M714.82 518.00L717.27 518.00L718.44 516.83L718.79 515.67L718.32 514.50L715.87 514.50L713.77 521.50L716.22 521.50L717.39 520.33L717.74 519.17L717.27 518.00M720.14 514.50L723.41 514.50L718.86 521.50M725.23 514.50L726.87 514.50L727.34 515.67L725.94 520.33L724.77 521.50L723.13 521.50L722.66 520.33L724.06 515.67L725.23 514.50M728.04 518.00L730.50 518.00M733.77 514.50L735.41 514.50L735.88 515.67L735.53 516.83L734.36 518.00L732.72 518.00L732.26 516.83L732.61 515.67L733.77 514.50M732.72 518.00L734.36 518.00L734.83 519.17L734.48 520.33L733.31 521.50L731.67 521.50L731.21 520.33L731.56 519.17L732.72 518.00M740.50 514.50L737.23 514.50L736.35 517.42L738.81 517.42L739.27 518.58L738.75 520.33L737.58 521.50L735.13 521.50" fill="none" stroke="#ffffff"/><path d="M885.12 515.67L886.33 514.50L884.23 521.50" fill="none" stroke="#ffffff"/><path d="M684.32 525.50L685.77 525.50L686.15 526.67L685.80 527.83L684.72 529.00L683.27 529.00L682.90 527.83L683.25 526.67L684.32 525.50M683.27 529.00L684.72 529.00L685.10 530.17L684.75 531.33L683.67 532.50L682.22 532.50L681.85 531.33L682.20 530.17L683.27 529.00" fill="none" stroke="#ffffff"/><path d="M714.52 526.67L714.05 525.50L712.42 525.50L711.25 526.67L709.85 531.33L710.32 532.50L711.95 532.50L713.12 531.33L713.82 529.00L712.19 529.00M714.82 529.00L717.27 529.00L718.44 527.83L718.79 526.67L718.32 525.50L715.87 525.50L713.77 532.50L716.22 532.50L717.39 531.33L717.74 530.17L717.27 529.00M723.41 525.50L720.14 525.50L719.27 528.42L721.72 528.42L722.19 529.58L721.66 531.33L720.50 532.50L718.04 532.50M724.41 525.50L727.69 525.50L725.17 528.42L725.99 528.42L726.46 529.58L725.94 531.33L724.77 532.50L723.13 532.50L722.66 531.33M728.04 529.00L730.50 529.00M732.96 525.50L736.23 525.50L731.67 532.50M739.68 525.50L738.05 525.50L736.88 526.67L735.48 531.33L735.95 532.50L737.58 532.50L738.75 531.33L739.27 529.58L738.81 528.42L736.35 528.42" fill="none" stroke="#ffffff"/><path d="M885.12 526.67L886.33 525.50L884.23 532.50" fill="none" stroke="#ffffff"/><path d="M683.60 537.50L686.50 537.50L682.22 544.50" fill="none" stroke="#ffffff"/><path d="M712.85 538.67L712.30 537.50L710.50 537.50L709.25 538.67L707.85 543.33L708.40 544.50L710.20 544.50L711.45 543.33L712.15 541.00L710.35 541.00M713.15 541.00L715.85 541.00L717.10 539.83L717.45 538.67L716.90 537.50L714.20 537.50L712.10 544.50L714.80 544.50L716.05 543.33L716.40 542.17L715.85 541.00M722.40 537.50L716.70 544.50M723.40 537.50L727.00 537.50M725.20 537.50L723.10 544.50M730.55 541.00L727.85 541.00L727.30 539.83L727.65 538.67L728.90 537.50L730.70 537.50L731.25 538.67L729.85 543.33L728.60 544.50L726.80 544.50M732.60 537.50L736.20 537.50L731.40 544.50M736.14 544.03L736.00 544.50M740.00 538.67L741.25 537.50L739.15 544.50" fill="none" stroke="#ffffff"/><path d="M885.12 538.67L886.33 537.50L884.23 544.50" fill="none" stroke="#ffffff"/><path d="M685.77 548.50L684.32 548.50L683.25 549.67L681.85 554.33L682.22 555.50L683.67 555.50L684.75 554.33L685.27 552.58L684.90 551.42L682.73 551.42" fill="none" stroke="#ffffff"/><path d="M717.45 548.50L719.16 548.50L719.66 549.67L718.26 554.33L717.06 555.50L715.35 555.50L714.85 554.33L716.25 549.67L717.45 548.50M716.90 553.17L717.91 555.50M721.86 548.50L723.57 548.50L724.07 549.67L723.72 550.83L722.52 552.00L720.81 552.00L720.31 550.83L720.66 549.67L721.86 548.50M720.81 552.00L722.52 552.00L723.02 553.17L722.67 554.33L721.47 555.50L719.76 555.50L719.26 554.33L719.61 553.17L720.81 552.00M725.92 549.67L727.12 548.50L725.02 555.50M728.63 552.00L731.19 552.00M734.17 549.67L735.37 548.50L733.27 555.50" fill="none" stroke="#ffffff"/><path d="M885.12 549.67L886.33 548.50L884.23 555.50" fill="none" stroke="#ffffff"/><path d="M686.50 560.50L683.60 560.50L682.73 563.42L684.90 563.42L685.27 564.58L684.75 566.33L683.67 567.50L681.50 567.50" fill="none" stroke="#ffffff"/><path d="M712.63 561.67L712.14 560.50L710.45 560.50L709.25 561.67L707.85 566.33L708.35 567.50L710.04 567.50L711.23 566.33L711.93 564.00L710.24 564.00M712.93 564.00L715.47 564.00L716.66 562.83L717.01 561.67L716.52 560.50L713.98 560.50L711.88 567.50L714.42 567.50L715.61 566.33L715.96 565.17L715.47 564.00M718.86 561.67L720.05 560.50L717.95 567.50M722.66 561.67L723.86 560.50L721.76 567.50M728.30 564.00L725.77 564.00L725.27 562.83L725.62 561.67L726.82 560.50L728.51 560.50L729.00 561.67L727.60 566.33L726.41 567.50L724.72 567.50M729.73 564.00L732.26 564.00M735.58 560.50L737.27 560.50L737.77 561.67L737.42 562.83L736.22 564.00L734.53 564.00L734.04 562.83L734.39 561.67L735.58 560.50M734.53 564.00L736.22 564.00L736.72 565.17L736.37 566.33L735.17 567.50L733.48 567.50L732.99 566.33L733.34 565.17L734.53 564.00M741.65 560.50L739.96 560.50L738.77 561.67L737.37 566.33L737.86 567.50L739.55 567.50L740.75 566.33L741.27 564.58L740.78 563.42L738.24 563.42" fill="none" stroke="#ffffff"/><path d="M885.12 561.67L886.33 560.50L884.23 567.50" fill="none" stroke="#ffffff"/><path d="M683.67 578.50L685.77 571.50L682.20 576.17L685.10 576.17" fill="none" stroke="#ffffff"/><path d="M704.60 571.50L708.34 571.50L702.50 578.50L706.24 578.50M709.34 571.50L710.97 578.50M713.07 571.50L707.24 578.50M713.72 572.67L715.01 571.50L716.88 571.50L717.46 572.67L717.11 573.83L711.97 578.50L715.71 578.50M718.81 571.50L722.55 571.50L717.64 578.50M722.96 575.00L725.77 575.00M728.87 572.67L730.15 571.50L728.05 578.50M731.46 578.03L731.32 578.50M735.41 572.67L736.69 571.50L734.59 578.50M738.44 575.00L741.25 575.00M743.76 571.50L747.50 571.50L744.76 574.42L745.69 574.42L746.27 575.58L745.75 577.33L744.47 578.50L742.60 578.50L742.01 577.33" fill="none" stroke="#ffffff"/><path d="M885.12 572.67L886.33 571.50L884.23 578.50" fill="none" stroke="#ffffff"/><path d="M683.60 583.50L686.50 583.50L684.17 586.42L684.90 586.42L685.27 587.58L684.75 589.33L683.67 590.50L682.22 590.50L681.85 589.33" fill="none" stroke="#ffffff"/><path d="M704.60 583.50L708.34 583.50L702.50 590.50L706.24 590.50M709.34 583.50L710.97 590.50M713.07 583.50L707.24 590.50M713.72 584.67L715.01 583.50L716.88 583.50L717.46 584.67L717.11 585.83L711.97 590.50L715.71 590.50M718.81 583.50L722.55 583.50L717.64 590.50M722.96 587.00L725.77 587.00M728.87 584.67L730.15 583.50L728.05 590.50M731.46 590.03L731.32 590.50M735.41 584.67L736.69 583.50L734.59 590.50M738.44 587.00L741.25 587.00M743.41 584.67L744.70 583.50L746.57 583.50L747.15 584.67L746.80 585.83L741.66 590.50L745.40 590.50" fill="none" stroke="#ffffff"/><path d="M885.12 584.67L886.33 583.50L884.23 590.50" fill="none" stroke="#ffffff"/><path d="M683.25 596.67L684.32 595.50L685.77 595.50L686.15 596.67L685.80 597.83L681.50 602.50L684.40 602.50" fill="none" stroke="#ffffff"/><path d="M712.63 596.67L712.14 595.50L710.45 595.50L709.25 596.67L707.85 601.33L708.35 602.50L710.04 602.50L711.23 601.33L711.93 599.00L710.24 599.00M712.93 599.00L715.47 599.00L716.66 597.83L717.01 596.67L716.52 595.50L713.98 595.50L711.88 602.50L714.42 602.50L715.61 601.33L715.96 600.17L715.47 599.00M718.86 596.67L720.05 595.50L717.95 602.50M722.66 596.67L723.86 595.50L721.76 602.50M728.30 599.00L725.77 599.00L725.27 597.83L725.62 596.67L726.82 595.50L728.51 595.50L729.00 596.67L727.60 601.33L726.41 602.50L724.72 602.50M729.73 599.00L732.26 599.00M735.58 595.50L737.27 595.50L737.77 596.67L737.42 597.83L736.22 599.00L734.53 599.00L734.04 597.83L734.39 596.67L735.58 595.50M734.53 599.00L736.22 599.00L736.72 600.17L736.37 601.33L735.17 602.50L733.48 602.50L732.99 601.33L733.34 600.17L734.53 599.00M741.65 595.50L739.96 595.50L738.77 596.67L737.37 601.33L737.86 602.50L739.55 602.50L740.75 601.33L741.27 599.58L740.78 598.42L738.24 598.42" fill="none" stroke="#ffffff"/><path d="M808.50 596.50L805.60 596.50L804.73 599.42L806.90 599.42L807.27 600.58L806.75 602.33L805.67 603.50L803.50 603.50" fill="none" stroke="#ffffff"/><line x1="810.5" y1="596.5" x2="818.5" y2="603.5" stroke="#ffffff"/><line x1="818.5" y1="596.5" x2="810.5" y2="603.5" stroke="#ffffff"/><path d="M822.25 597.67L823.46 596.50L825.19 596.50L825.70 597.67L825.35 598.83L820.50 603.50L823.95 603.50M827.91 596.50L829.64 596.50L830.15 597.67L828.75 602.33L827.54 603.50L825.81 603.50L825.30 602.33L826.70 597.67L827.91 596.50" fill="none" stroke="#ffffff"/><path d="M884.60 595.50L887.50 595.50L885.17 598.42L885.90 598.42L886.27 599.58L885.75 601.33L884.67 602.50L883.22 602.50L882.85 601.33" fill="none" stroke="#ffffff"/><path d="M684.12 607.67L685.33 606.50L683.23 613.50" fill="none" stroke="#ffffff"/><path d="M704.60 606.50L708.39 606.50L702.50 613.50L706.29 613.50M709.39 606.50L711.08 613.50M713.18 606.50L707.29 613.50M713.83 607.67L715.13 606.50L717.02 606.50L717.62 607.67L717.27 608.83L712.08 613.50L715.87 613.50M718.97 606.50L722.76 606.50L717.82 613.50M723.18 610.00L726.03 610.00M729.15 607.67L730.44 606.50L728.34 613.50M731.80 613.03L731.66 613.50M735.78 607.67L737.08 606.50L734.98 613.50M738.87 610.00L741.71 610.00M744.83 607.67L746.13 606.50L744.03 613.50" fill="none" stroke="#ffffff"/><path d="M885.12 607.67L886.33 606.50L884.23 613.50" fill="none" stroke="#ffffff"/><path d="M921.49 548.50L919.56 548.50L918.25 549.67L916.85 554.33L917.46 555.50L919.39 555.50L920.71 554.33L921.23 552.58L920.62 551.42L917.73 551.42M924.42 548.50L926.35 548.50L926.97 549.67L925.57 554.33L924.25 555.50L922.32 555.50L921.71 554.33L923.11 549.67L924.42 548.50M931.82 549.67L931.21 548.50L929.28 548.50L927.97 549.67L927.62 550.83L928.23 552.00L930.16 552.00L930.77 553.17L930.42 554.33L929.11 555.50L927.18 555.50L926.57 554.33M934.40 550.83L933.00 555.50M935.10 548.50L934.86 549.32M935.72 549.67L937.03 548.50L938.96 548.50L939.58 549.67L939.23 550.83L933.97 555.50L937.83 555.50M938.83 555.50L940.93 548.50L941.80 552.00L944.78 548.50L942.68 555.50M945.08 550.83L943.68 555.50M944.73 552.00L946.05 550.83L947.98 550.83L948.59 552.00L947.54 555.50M948.54 555.50L952.57 548.50L952.40 555.50M950.21 553.17L952.14 553.17" fill="none" stroke="#ffffff"/><path d="M762.30 673.50L764.51 673.50M763.41 673.50L761.61 679.50M765.51 673.50L763.71 679.50M767.73 673.50L765.93 679.50M764.61 676.50L766.83 676.50M768.59 679.50L770.39 673.50L767.53 677.50L769.74 677.50M773.60 673.50L772.49 673.50L771.64 674.50L770.44 678.50L770.69 679.50L771.80 679.50L772.65 678.50L773.10 677.00L772.85 676.00L771.19 676.00M775.71 673.50L776.82 673.50L777.07 674.50L775.87 678.50L775.02 679.50L773.91 679.50L773.65 678.50L774.85 674.50L775.71 673.50M778.37 673.50L780.58 673.50L777.12 679.50M781.44 679.50L783.24 673.50L780.38 677.50L782.60 677.50M785.05 674.50L785.90 673.50L784.10 679.50M787.29 673.50L789.50 673.50L786.04 679.50" fill="none" stroke="#ffffff"/><path d="M838.98 656.83L839.86 655.50L837.46 663.50M842.80 657.63L842.64 658.17M841.20 662.97L841.04 663.50M845.43 656.83L846.31 655.50L843.91 663.50" fill="none" stroke="#ffffff"/><path d="M906.60 671.50L910.46 671.50L904.50 678.50L908.36 678.50M911.46 671.50L913.22 678.50M915.32 671.50L909.36 678.50M915.97 672.67L917.28 671.50L919.21 671.50L919.82 672.67L919.47 673.83L914.22 678.50L918.07 678.50M921.17 671.50L925.03 671.50L920.04 678.50M925.46 675.00L928.36 675.00M930.89 671.50L934.75 671.50L931.94 674.42L932.91 674.42L933.52 675.58L933.00 677.33L931.68 678.50L929.75 678.50L929.14 677.33M934.75 678.03L934.61 678.50M938.77 672.67L940.09 671.50L937.99 678.50" fill="none" stroke="#ffffff"/><path d="M713 208h1v1h-1zM717 208h1v1h-1zM724 208h3v1h-3zM730 208h7v1h-7zM741 208h4v1h-4zM713 209h2v1h-2zM716 209h4v1h-4zM724 209h4v1h-4zM730 209h7v1h-7zM741 209h5v1h-5zM712 210h8v1h-8zM724 210h4v1h-4zM730 210h7v1h-7zM738 210h8v1h-8zM713 211h2v1h-2zM717 211h2v1h-2zM721 211h8v1h-8zM730 211h7v1h-7zM739 211h1v1h-1zM741 211h2v1h-2zM744 211h1v1h-1zM713 212h7v1h-7zM723 212h4v1h-4zM730 212h7v1h-7zM739 212h7v1h-7zM747 212h1v1h-1zM712 213h5v1h-5zM718 213h2v1h-2zM723 213h4v1h-4zM730 213h7v1h-7zM739 213h1v1h-1zM741 213h4v1h-4zM713 214h2v1h-2zM716 214h4v1h-4zM722 214h6v1h-6zM730 214h8v1h-8zM739 214h6v1h-6zM713 215h2v1h-2zM716 215h3v1h-3zM721 215h2v1h-2zM724 215h2v1h-2zM727 215h2v1h-2zM731 215h5v1h-5zM738 215h8v1h-8zM713 216h7v1h-7zM721 216h1v1h-1zM724 216h2v1h-2zM731 216h6v1h-6zM738 216h1v1h-1zM740 216h3v1h-3zM744 216h2v1h-2zM712 217h2v1h-2zM715 217h2v1h-2zM719 217h1v1h-1zM724 217h2v1h-2zM730 217h3v1h-3zM735 217h2v1h-2zM740 217h2v1h-2zM747 217h1v1h-1zM675 236h1v1h-1zM682 236h5v1h-5zM691 236h1v1h-1zM694 236h1v1h-1zM699 236h1v1h-1zM703 236h1v1h-1zM707 236h1v1h-1zM711 236h2v1h-2zM718 236h1v1h-1zM726 236h1v1h-1zM732 236h1v1h-1zM745 236h1v1h-1zM749 236h1v1h-1zM752 236h1v1h-1zM757 236h1v1h-1zM760 236h1v1h-1zM674 237h5v1h-5zM681 237h7v1h-7zM690 237h5v1h-5zM699 237h1v1h-1zM703 237h2v1h-2zM706 237h7v1h-7zM715 237h6v1h-6zM722 237h2v1h-2zM726 237h1v1h-1zM728 237h1v1h-1zM731 237h2v1h-2zM734 237h4v1h-4zM739 237h3v1h-3zM745 237h1v1h-1zM748 237h3v1h-3zM752 237h1v1h-1zM756 237h2v1h-2zM760 237h1v1h-1zM764 237h7v1h-7zM665 238h2v1h-2zM673 238h6v1h-6zM681 238h7v1h-7zM690 238h6v1h-6zM698 238h7v1h-7zM706 238h3v1h-3zM710 238h3v1h-3zM714 238h8v1h-8zM723 238h7v1h-7zM731 238h2v1h-2zM735 238h3v1h-3zM739 238h16v1h-16zM756 238h5v1h-5zM764 238h2v1h-2zM767 238h4v1h-4zM665 239h2v1h-2zM673 239h6v1h-6zM681 239h7v1h-7zM689 239h16v1h-16zM706 239h3v1h-3zM711 239h2v1h-2zM714 239h2v1h-2zM718 239h1v1h-1zM720 239h1v1h-1zM725 239h5v1h-5zM731 239h3v1h-3zM739 239h1v1h-1zM741 239h6v1h-6zM748 239h1v1h-1zM750 239h5v1h-5zM756 239h6v1h-6zM764 239h2v1h-2zM767 239h4v1h-4zM666 240h1v1h-1zM675 240h3v1h-3zM682 240h5v1h-5zM689 240h4v1h-4zM694 240h1v1h-1zM698 240h2v1h-2zM702 240h3v1h-3zM706 240h7v1h-7zM714 240h5v1h-5zM720 240h1v1h-1zM722 240h2v1h-2zM726 240h3v1h-3zM732 240h6v1h-6zM739 240h3v1h-3zM745 240h1v1h-1zM747 240h2v1h-2zM750 240h5v1h-5zM756 240h7v1h-7zM764 240h7v1h-7zM773 240h1v1h-1zM666 241h1v1h-1zM673 241h7v1h-7zM683 241h4v1h-4zM689 241h2v1h-2zM692 241h5v1h-5zM698 241h3v1h-3zM702 241h3v1h-3zM706 241h3v1h-3zM710 241h3v1h-3zM714 241h5v1h-5zM720 241h1v1h-1zM722 241h8v1h-8zM731 241h2v1h-2zM734 241h4v1h-4zM739 241h5v1h-5zM745 241h1v1h-1zM747 241h2v1h-2zM750 241h4v1h-4zM756 241h3v1h-3zM760 241h3v1h-3zM764 241h7v1h-7zM666 242h1v1h-1zM673 242h7v1h-7zM681 242h7v1h-7zM690 242h7v1h-7zM698 242h7v1h-7zM706 242h3v1h-3zM711 242h10v1h-10zM723 242h7v1h-7zM731 242h2v1h-2zM736 242h1v1h-1zM739 242h1v1h-1zM741 242h1v1h-1zM743 242h3v1h-3zM748 242h3v1h-3zM752 242h2v1h-2zM756 242h3v1h-3zM760 242h1v1h-1zM762 242h1v1h-1zM764 242h2v1h-2zM768 242h2v1h-2zM666 243h1v1h-1zM674 243h5v1h-5zM681 243h7v1h-7zM690 243h1v1h-1zM693 243h2v1h-2zM697 243h8v1h-8zM706 243h12v1h-12zM719 243h2v1h-2zM723 243h4v1h-4zM728 243h1v1h-1zM731 243h2v1h-2zM736 243h1v1h-1zM739 243h3v1h-3zM743 243h1v1h-1zM745 243h1v1h-1zM748 243h3v1h-3zM752 243h2v1h-2zM757 243h2v1h-2zM760 243h1v1h-1zM764 243h7v1h-7zM665 244h4v1h-4zM670 244h1v1h-1zM674 244h1v1h-1zM678 244h1v1h-1zM682 244h5v1h-5zM690 244h1v1h-1zM694 244h1v1h-1zM697 244h5v1h-5zM703 244h2v1h-2zM706 244h2v1h-2zM709 244h4v1h-4zM714 244h2v1h-2zM719 244h1v1h-1zM723 244h3v1h-3zM728 244h1v1h-1zM732 244h1v1h-1zM736 244h1v1h-1zM739 244h3v1h-3zM745 244h1v1h-1zM748 244h3v1h-3zM752 244h2v1h-2zM757 244h4v1h-4zM764 244h3v1h-3zM768 244h2v1h-2zM773 244h1v1h-1zM665 245h4v1h-4zM674 245h5v1h-5zM683 245h4v1h-4zM690 245h1v1h-1zM694 245h1v1h-1zM699 245h1v1h-1zM702 245h2v1h-2zM707 245h1v1h-1zM711 245h2v1h-2zM714 245h16v1h-16zM732 245h1v1h-1zM735 245h2v1h-2zM739 245h1v1h-1zM743 245h3v1h-3zM747 245h8v1h-8zM756 245h9v1h-9zM766 245h6v1h-6zM674 246h5v1h-5zM683 246h2v1h-2zM690 246h1v1h-1zM694 246h1v1h-1zM699 246h1v1h-1zM702 246h2v1h-2zM707 246h1v1h-1zM711 246h2v1h-2zM714 246h8v1h-8zM725 246h5v1h-5zM732 246h1v1h-1zM735 246h2v1h-2zM743 246h2v1h-2zM748 246h1v1h-1zM751 246h1v1h-1zM754 246h1v1h-1zM756 246h1v1h-1zM760 246h3v1h-3zM766 246h5v1h-5zM678 250h1v1h-1zM687 250h1v1h-1zM699 250h1v1h-1zM703 250h1v1h-1zM707 250h1v1h-1zM711 250h2v1h-2zM724 250h1v1h-1zM734 250h3v1h-3zM742 250h1v1h-1zM748 250h2v1h-2zM752 250h1v1h-1zM673 251h3v1h-3zM678 251h2v1h-2zM681 251h7v1h-7zM690 251h7v1h-7zM699 251h1v1h-1zM703 251h2v1h-2zM706 251h7v1h-7zM714 251h2v1h-2zM717 251h4v1h-4zM723 251h2v1h-2zM726 251h4v1h-4zM731 251h7v1h-7zM742 251h2v1h-2zM748 251h2v1h-2zM752 251h1v1h-1zM755 251h8v1h-8zM665 252h4v1h-4zM673 252h7v1h-7zM685 252h2v1h-2zM690 252h7v1h-7zM698 252h7v1h-7zM706 252h3v1h-3zM710 252h3v1h-3zM715 252h9v1h-9zM726 252h3v1h-3zM731 252h7v1h-7zM742 252h2v1h-2zM748 252h5v1h-5zM756 252h7v1h-7zM668 253h1v1h-1zM675 253h5v1h-5zM681 253h5v1h-5zM690 253h15v1h-15zM706 253h3v1h-3zM711 253h2v1h-2zM717 253h4v1h-4zM722 253h3v1h-3zM733 253h5v1h-5zM740 253h1v1h-1zM742 253h2v1h-2zM745 253h1v1h-1zM748 253h6v1h-6zM756 253h7v1h-7zM668 254h1v1h-1zM673 254h3v1h-3zM678 254h2v1h-2zM681 254h8v1h-8zM690 254h7v1h-7zM698 254h2v1h-2zM702 254h3v1h-3zM706 254h7v1h-7zM714 254h2v1h-2zM717 254h4v1h-4zM723 254h7v1h-7zM731 254h1v1h-1zM733 254h5v1h-5zM739 254h2v1h-2zM742 254h4v1h-4zM748 254h1v1h-1zM750 254h4v1h-4zM755 254h8v1h-8zM764 254h1v1h-1zM667 255h1v1h-1zM673 255h4v1h-4zM678 255h2v1h-2zM681 255h7v1h-7zM690 255h1v1h-1zM692 255h2v1h-2zM695 255h2v1h-2zM698 255h3v1h-3zM702 255h3v1h-3zM706 255h3v1h-3zM710 255h3v1h-3zM714 255h11v1h-11zM726 255h4v1h-4zM731 255h7v1h-7zM739 255h2v1h-2zM742 255h3v1h-3zM747 255h4v1h-4zM752 255h3v1h-3zM756 255h7v1h-7zM666 256h1v1h-1zM674 256h6v1h-6zM681 256h5v1h-5zM687 256h1v1h-1zM690 256h7v1h-7zM698 256h7v1h-7zM706 256h3v1h-3zM711 256h3v1h-3zM715 256h10v1h-10zM728 256h1v1h-1zM731 256h7v1h-7zM741 256h3v1h-3zM748 256h3v1h-3zM752 256h1v1h-1zM756 256h2v1h-2zM760 256h2v1h-2zM665 257h1v1h-1zM674 257h6v1h-6zM681 257h1v1h-1zM684 257h2v1h-2zM687 257h1v1h-1zM690 257h15v1h-15zM706 257h8v1h-8zM715 257h1v1h-1zM717 257h1v1h-1zM719 257h2v1h-2zM723 257h2v1h-2zM728 257h1v1h-1zM731 257h7v1h-7zM741 257h4v1h-4zM749 257h2v1h-2zM752 257h1v1h-1zM756 257h7v1h-7zM664 258h5v1h-5zM670 258h1v1h-1zM673 258h4v1h-4zM678 258h2v1h-2zM681 258h1v1h-1zM684 258h2v1h-2zM687 258h1v1h-1zM689 258h2v1h-2zM692 258h2v1h-2zM695 258h7v1h-7zM703 258h2v1h-2zM706 258h2v1h-2zM709 258h4v1h-4zM715 258h3v1h-3zM719 258h2v1h-2zM723 258h2v1h-2zM728 258h1v1h-1zM731 258h4v1h-4zM737 258h1v1h-1zM740 258h2v1h-2zM743 258h3v1h-3zM748 258h5v1h-5zM755 258h4v1h-4zM760 258h2v1h-2zM764 258h1v1h-1zM665 259h4v1h-4zM673 259h1v1h-1zM677 259h3v1h-3zM681 259h1v1h-1zM684 259h1v1h-1zM687 259h1v1h-1zM689 259h2v1h-2zM692 259h4v1h-4zM699 259h1v1h-1zM702 259h2v1h-2zM707 259h1v1h-1zM711 259h2v1h-2zM714 259h8v1h-8zM723 259h2v1h-2zM726 259h3v1h-3zM731 259h7v1h-7zM739 259h2v1h-2zM744 259h13v1h-13zM758 259h5v1h-5zM673 260h1v1h-1zM677 260h2v1h-2zM681 260h1v1h-1zM684 260h1v1h-1zM687 260h1v1h-1zM689 260h1v1h-1zM692 260h4v1h-4zM699 260h1v1h-1zM702 260h2v1h-2zM707 260h1v1h-1zM711 260h2v1h-2zM714 260h1v1h-1zM717 260h4v1h-4zM723 260h2v1h-2zM727 260h2v1h-2zM733 260h5v1h-5zM739 260h1v1h-1zM745 260h1v1h-1zM748 260h1v1h-1zM751 260h4v1h-4zM758 260h5v1h-5zM674 265h1v1h-1zM677 265h1v1h-1zM681 265h3v1h-3zM694 265h2v1h-2zM701 265h3v1h-3zM707 265h1v1h-1zM715 265h1v1h-1zM719 265h1v1h-1zM727 265h1v1h-1zM731 265h7v1h-7zM740 265h5v1h-5zM748 265h1v1h-1zM753 265h1v1h-1zM673 266h7v1h-7zM681 266h7v1h-7zM690 266h6v1h-6zM698 266h6v1h-6zM707 266h1v1h-1zM709 266h12v1h-12zM723 266h3v1h-3zM727 266h1v1h-1zM731 266h7v1h-7zM740 266h6v1h-6zM748 266h7v1h-7zM665 267h4v1h-4zM673 267h7v1h-7zM681 267h3v1h-3zM687 267h1v1h-1zM690 267h3v1h-3zM699 267h3v1h-3zM706 267h3v1h-3zM710 267h2v1h-2zM714 267h8v1h-8zM723 267h6v1h-6zM731 267h7v1h-7zM739 267h8v1h-8zM750 267h3v1h-3zM668 268h1v1h-1zM673 268h2v1h-2zM677 268h2v1h-2zM681 268h4v1h-4zM687 268h1v1h-1zM690 268h7v1h-7zM698 268h6v1h-6zM706 268h7v1h-7zM714 268h8v1h-8zM726 268h4v1h-4zM731 268h7v1h-7zM740 268h6v1h-6zM750 268h5v1h-5zM756 268h1v1h-1zM668 269h1v1h-1zM672 269h8v1h-8zM681 269h7v1h-7zM690 269h7v1h-7zM698 269h7v1h-7zM706 269h2v1h-2zM709 269h4v1h-4zM714 269h12v1h-12zM727 269h3v1h-3zM731 269h7v1h-7zM740 269h6v1h-6zM747 269h8v1h-8zM756 269h1v1h-1zM666 270h2v1h-2zM674 270h3v1h-3zM681 270h7v1h-7zM690 270h1v1h-1zM700 270h2v1h-2zM706 270h7v1h-7zM714 270h3v1h-3zM718 270h3v1h-3zM723 270h2v1h-2zM727 270h1v1h-1zM729 270h1v1h-1zM731 270h7v1h-7zM740 270h1v1h-1zM742 270h1v1h-1zM748 270h1v1h-1zM752 270h1v1h-1zM668 271h1v1h-1zM673 271h7v1h-7zM681 271h5v1h-5zM690 271h6v1h-6zM697 271h8v1h-8zM706 271h7v1h-7zM715 271h2v1h-2zM718 271h4v1h-4zM723 271h3v1h-3zM727 271h1v1h-1zM729 271h1v1h-1zM731 271h7v1h-7zM740 271h1v1h-1zM742 271h1v1h-1zM744 271h2v1h-2zM750 271h5v1h-5zM668 272h1v1h-1zM673 272h7v1h-7zM681 272h5v1h-5zM690 272h6v1h-6zM698 272h7v1h-7zM706 272h2v1h-2zM709 272h4v1h-4zM714 272h4v1h-4zM719 272h2v1h-2zM723 272h7v1h-7zM731 272h7v1h-7zM739 272h2v1h-2zM742 272h3v1h-3zM748 272h7v1h-7zM665 273h1v1h-1zM667 273h2v1h-2zM670 273h1v1h-1zM673 273h3v1h-3zM677 273h2v1h-2zM681 273h5v1h-5zM687 273h6v1h-6zM695 273h1v1h-1zM700 273h2v1h-2zM706 273h2v1h-2zM709 273h1v1h-1zM712 273h1v1h-1zM714 273h3v1h-3zM718 273h3v1h-3zM722 273h8v1h-8zM732 273h4v1h-4zM741 273h4v1h-4zM748 273h1v1h-1zM750 273h1v1h-1zM753 273h2v1h-2zM756 273h1v1h-1zM666 274h2v1h-2zM673 274h7v1h-7zM681 274h15v1h-15zM699 274h3v1h-3zM707 274h1v1h-1zM709 274h1v1h-1zM711 274h2v1h-2zM715 274h2v1h-2zM719 274h2v1h-2zM723 274h1v1h-1zM726 274h4v1h-4zM731 274h7v1h-7zM739 274h3v1h-3zM743 274h3v1h-3zM747 274h2v1h-2zM750 274h5v1h-5zM756 274h1v1h-1zM673 275h3v1h-3zM678 275h2v1h-2zM681 275h1v1h-1zM683 275h1v1h-1zM685 275h3v1h-3zM691 275h5v1h-5zM699 275h3v1h-3zM707 275h1v1h-1zM709 275h1v1h-1zM711 275h2v1h-2zM715 275h2v1h-2zM720 275h1v1h-1zM726 275h1v1h-1zM728 275h1v1h-1zM731 275h3v1h-3zM736 275h2v1h-2zM739 275h2v1h-2zM744 275h2v1h-2zM750 275h5v1h-5zM673 280h1v1h-1zM676 280h3v1h-3zM682 280h1v1h-1zM685 280h1v1h-1zM691 280h1v1h-1zM701 280h1v1h-1zM709 280h2v1h-2zM715 280h1v1h-1zM724 280h1v1h-1zM727 280h1v1h-1zM735 280h1v1h-1zM743 280h3v1h-3zM756 280h1v1h-1zM768 280h2v1h-2zM773 280h3v1h-3zM783 280h2v1h-2zM673 281h7v1h-7zM682 281h1v1h-1zM685 281h1v1h-1zM691 281h5v1h-5zM698 281h6v1h-6zM706 281h7v1h-7zM714 281h11v1h-11zM726 281h4v1h-4zM731 281h3v1h-3zM735 281h2v1h-2zM739 281h7v1h-7zM747 281h7v1h-7zM756 281h7v1h-7zM764 281h7v1h-7zM772 281h8v1h-8zM783 281h3v1h-3zM667 282h1v1h-1zM675 282h5v1h-5zM681 282h2v1h-2zM684 282h4v1h-4zM691 282h5v1h-5zM698 282h7v1h-7zM706 282h7v1h-7zM715 282h1v1h-1zM720 282h2v1h-2zM723 282h7v1h-7zM731 282h3v1h-3zM735 282h3v1h-3zM740 282h3v1h-3zM745 282h1v1h-1zM748 282h1v1h-1zM750 282h5v1h-5zM761 282h2v1h-2zM764 282h7v1h-7zM773 282h2v1h-2zM778 282h2v1h-2zM782 282h5v1h-5zM666 283h2v1h-2zM673 283h1v1h-1zM675 283h5v1h-5zM681 283h7v1h-7zM690 283h2v1h-2zM700 283h2v1h-2zM706 283h7v1h-7zM714 283h15v1h-15zM734 283h4v1h-4zM740 283h1v1h-1zM742 283h1v1h-1zM744 283h2v1h-2zM748 283h7v1h-7zM756 283h1v1h-1zM758 283h3v1h-3zM762 283h1v1h-1zM764 283h7v1h-7zM772 283h4v1h-4zM778 283h2v1h-2zM781 283h2v1h-2zM785 283h3v1h-3zM666 284h2v1h-2zM673 284h7v1h-7zM681 284h2v1h-2zM685 284h1v1h-1zM687 284h1v1h-1zM690 284h6v1h-6zM698 284h6v1h-6zM706 284h7v1h-7zM714 284h14v1h-14zM731 284h7v1h-7zM740 284h1v1h-1zM742 284h1v1h-1zM744 284h1v1h-1zM748 284h7v1h-7zM756 284h5v1h-5zM762 284h1v1h-1zM764 284h7v1h-7zM772 284h16v1h-16zM789 284h1v1h-1zM665 285h1v1h-1zM667 285h1v1h-1zM675 285h5v1h-5zM682 285h1v1h-1zM684 285h4v1h-4zM690 285h5v1h-5zM698 285h6v1h-6zM706 285h7v1h-7zM714 285h8v1h-8zM723 285h6v1h-6zM731 285h2v1h-2zM735 285h3v1h-3zM739 285h7v1h-7zM748 285h7v1h-7zM756 285h5v1h-5zM762 285h1v1h-1zM764 285h7v1h-7zM772 285h8v1h-8zM664 286h2v1h-2zM667 286h1v1h-1zM674 286h6v1h-6zM682 286h6v1h-6zM690 286h6v1h-6zM699 286h2v1h-2zM702 286h2v1h-2zM706 286h6v1h-6zM714 286h8v1h-8zM723 286h7v1h-7zM731 286h3v1h-3zM735 286h1v1h-1zM737 286h1v1h-1zM739 286h8v1h-8zM748 286h3v1h-3zM752 286h2v1h-2zM756 286h5v1h-5zM762 286h1v1h-1zM764 286h7v1h-7zM772 286h6v1h-6zM782 286h5v1h-5zM664 287h5v1h-5zM673 287h7v1h-7zM681 287h6v1h-6zM689 287h8v1h-8zM699 287h4v1h-4zM706 287h7v1h-7zM714 287h16v1h-16zM731 287h5v1h-5zM737 287h1v1h-1zM741 287h4v1h-4zM748 287h1v1h-1zM750 287h1v1h-1zM752 287h2v1h-2zM756 287h5v1h-5zM762 287h1v1h-1zM764 287h7v1h-7zM772 287h6v1h-6zM781 287h6v1h-6zM667 288h1v1h-1zM670 288h1v1h-1zM673 288h7v1h-7zM681 288h1v1h-1zM684 288h4v1h-4zM694 288h1v1h-1zM700 288h3v1h-3zM706 288h1v1h-1zM708 288h5v1h-5zM714 288h11v1h-11zM727 288h2v1h-2zM731 288h5v1h-5zM737 288h1v1h-1zM740 288h6v1h-6zM747 288h4v1h-4zM752 288h2v1h-2zM756 288h1v1h-1zM758 288h3v1h-3zM762 288h1v1h-1zM764 288h1v1h-1zM767 288h4v1h-4zM772 288h6v1h-6zM779 288h1v1h-1zM781 288h2v1h-2zM786 288h1v1h-1zM789 288h1v1h-1zM673 289h1v1h-1zM675 289h5v1h-5zM683 289h2v1h-2zM686 289h2v1h-2zM692 289h3v1h-3zM697 289h8v1h-8zM706 289h10v1h-10zM720 289h2v1h-2zM723 289h5v1h-5zM731 289h1v1h-1zM734 289h4v1h-4zM739 289h2v1h-2zM742 289h13v1h-13zM756 289h1v1h-1zM761 289h2v1h-2zM764 289h1v1h-1zM766 289h14v1h-14zM781 289h6v1h-6zM673 290h1v1h-1zM675 290h2v1h-2zM678 290h1v1h-1zM683 290h1v1h-1zM687 290h1v1h-1zM692 290h3v1h-3zM698 290h2v1h-2zM703 290h2v1h-2zM706 290h7v1h-7zM714 290h2v1h-2zM720 290h1v1h-1zM723 290h4v1h-4zM736 290h2v1h-2zM742 290h1v1h-1zM750 290h2v1h-2zM754 290h1v1h-1zM756 290h1v1h-1zM761 290h2v1h-2zM764 290h1v1h-1zM768 290h1v1h-1zM772 290h1v1h-1zM775 290h1v1h-1zM777 290h2v1h-2zM781 290h6v1h-6zM676 295h1v1h-1zM682 295h1v1h-1zM690 295h1v1h-1zM693 295h1v1h-1zM707 295h1v1h-1zM710 295h1v1h-1zM716 295h1v1h-1zM724 295h1v1h-1zM727 295h1v1h-1zM732 295h5v1h-5zM741 295h1v1h-1zM749 295h1v1h-1zM752 295h1v1h-1zM756 295h2v1h-2zM760 295h1v1h-1zM675 296h2v1h-2zM682 296h1v1h-1zM684 296h4v1h-4zM690 296h2v1h-2zM693 296h2v1h-2zM697 296h5v1h-5zM703 296h2v1h-2zM707 296h2v1h-2zM710 296h3v1h-3zM714 296h7v1h-7zM723 296h2v1h-2zM727 296h1v1h-1zM731 296h7v1h-7zM740 296h2v1h-2zM743 296h2v1h-2zM748 296h6v1h-6zM756 296h2v1h-2zM759 296h4v1h-4zM778 296h2v1h-2zM802 296h1v1h-1zM665 297h4v1h-4zM673 297h7v1h-7zM681 297h3v1h-3zM685 297h3v1h-3zM693 297h3v1h-3zM698 297h6v1h-6zM706 297h3v1h-3zM710 297h1v1h-1zM712 297h1v1h-1zM715 297h2v1h-2zM718 297h4v1h-4zM723 297h7v1h-7zM731 297h7v1h-7zM740 297h2v1h-2zM744 297h2v1h-2zM748 297h7v1h-7zM756 297h7v1h-7zM764 297h4v1h-4zM770 297h4v1h-4zM778 297h1v1h-1zM780 297h5v1h-5zM790 297h2v1h-2zM796 297h2v1h-2zM801 297h4v1h-4zM806 297h4v1h-4zM818 297h2v1h-2zM823 297h3v1h-3zM828 297h4v1h-4zM834 297h4v1h-4zM665 298h1v1h-1zM674 298h5v1h-5zM681 298h7v1h-7zM689 298h1v1h-1zM692 298h5v1h-5zM698 298h1v1h-1zM700 298h1v1h-1zM702 298h1v1h-1zM706 298h7v1h-7zM714 298h5v1h-5zM720 298h10v1h-10zM731 298h7v1h-7zM739 298h2v1h-2zM744 298h2v1h-2zM748 298h6v1h-6zM755 298h6v1h-6zM762 298h1v1h-1zM764 298h1v1h-1zM770 298h1v1h-1zM773 298h1v1h-1zM777 298h2v1h-2zM782 298h1v1h-1zM791 298h1v1h-1zM795 298h1v1h-1zM797 298h1v1h-1zM800 298h2v1h-2zM804 298h1v1h-1zM806 298h1v1h-1zM809 298h1v1h-1zM817 298h1v1h-1zM819 298h1v1h-1zM822 298h1v1h-1zM826 298h1v1h-1zM828 298h1v1h-1zM831 298h1v1h-1zM834 298h1v1h-1zM665 299h3v1h-3zM673 299h7v1h-7zM681 299h2v1h-2zM684 299h7v1h-7zM693 299h2v1h-2zM698 299h4v1h-4zM703 299h2v1h-2zM707 299h12v1h-12zM720 299h7v1h-7zM728 299h1v1h-1zM731 299h7v1h-7zM739 299h2v1h-2zM742 299h1v1h-1zM745 299h1v1h-1zM748 299h6v1h-6zM756 299h2v1h-2zM759 299h2v1h-2zM762 299h1v1h-1zM764 299h1v1h-1zM770 299h1v1h-1zM773 299h1v1h-1zM777 299h2v1h-2zM782 299h1v1h-1zM791 299h1v1h-1zM797 299h1v1h-1zM801 299h1v1h-1zM803 299h2v1h-2zM809 299h1v1h-1zM819 299h1v1h-1zM822 299h1v1h-1zM826 299h1v1h-1zM828 299h1v1h-1zM831 299h1v1h-1zM833 299h4v1h-4zM665 300h1v1h-1zM667 300h2v1h-2zM673 300h7v1h-7zM681 300h3v1h-3zM685 300h2v1h-2zM690 300h1v1h-1zM693 300h2v1h-2zM697 300h7v1h-7zM707 300h2v1h-2zM710 300h2v1h-2zM715 300h2v1h-2zM718 300h1v1h-1zM720 300h7v1h-7zM728 300h1v1h-1zM731 300h7v1h-7zM741 300h2v1h-2zM747 300h8v1h-8zM756 300h9v1h-9zM767 300h1v1h-1zM770 300h3v1h-3zM776 300h2v1h-2zM782 300h1v1h-1zM791 300h1v1h-1zM797 300h1v1h-1zM801 300h3v1h-3zM808 300h2v1h-2zM819 300h1v1h-1zM822 300h2v1h-2zM825 300h2v1h-2zM828 300h1v1h-1zM831 300h4v1h-4zM836 300h2v1h-2zM668 301h1v1h-1zM675 301h3v1h-3zM681 301h7v1h-7zM692 301h5v1h-5zM698 301h1v1h-1zM700 301h1v1h-1zM702 301h1v1h-1zM706 301h3v1h-3zM710 301h2v1h-2zM715 301h4v1h-4zM720 301h2v1h-2zM723 301h2v1h-2zM726 301h1v1h-1zM728 301h1v1h-1zM731 301h7v1h-7zM741 301h2v1h-2zM744 301h1v1h-1zM748 301h6v1h-6zM755 301h3v1h-3zM759 301h4v1h-4zM764 301h1v1h-1zM767 301h2v1h-2zM770 301h1v1h-1zM773 301h1v1h-1zM776 301h2v1h-2zM782 301h1v1h-1zM791 301h1v1h-1zM797 301h1v1h-1zM800 301h2v1h-2zM804 301h1v1h-1zM807 301h2v1h-2zM812 301h4v1h-4zM819 301h1v1h-1zM823 301h4v1h-4zM829 301h3v1h-3zM833 301h2v1h-2zM837 301h1v1h-1zM668 302h1v1h-1zM674 302h5v1h-5zM681 302h2v1h-2zM684 302h4v1h-4zM690 302h2v1h-2zM693 302h2v1h-2zM698 302h1v1h-1zM700 302h1v1h-1zM703 302h2v1h-2zM706 302h6v1h-6zM714 302h5v1h-5zM720 302h2v1h-2zM723 302h2v1h-2zM726 302h1v1h-1zM728 302h1v1h-1zM731 302h7v1h-7zM741 302h1v1h-1zM744 302h2v1h-2zM748 302h6v1h-6zM756 302h2v1h-2zM759 302h3v1h-3zM764 302h1v1h-1zM768 302h1v1h-1zM770 302h1v1h-1zM773 302h1v1h-1zM775 302h2v1h-2zM782 302h1v1h-1zM791 302h1v1h-1zM797 302h1v1h-1zM800 302h1v1h-1zM804 302h1v1h-1zM806 302h2v1h-2zM819 302h1v1h-1zM826 302h1v1h-1zM831 302h1v1h-1zM833 302h2v1h-2zM837 302h1v1h-1zM665 303h1v1h-1zM667 303h2v1h-2zM670 303h1v1h-1zM673 303h7v1h-7zM681 303h8v1h-8zM690 303h2v1h-2zM694 303h1v1h-1zM698 303h1v1h-1zM700 303h1v1h-1zM703 303h2v1h-2zM707 303h6v1h-6zM714 303h3v1h-3zM718 303h4v1h-4zM723 303h2v1h-2zM726 303h3v1h-3zM731 303h7v1h-7zM740 303h6v1h-6zM748 303h2v1h-2zM751 303h2v1h-2zM756 303h2v1h-2zM759 303h3v1h-3zM764 303h4v1h-4zM770 303h4v1h-4zM775 303h2v1h-2zM782 303h1v1h-1zM790 303h4v1h-4zM795 303h4v1h-4zM800 303h2v1h-2zM803 303h2v1h-2zM806 303h4v1h-4zM817 303h4v1h-4zM823 303h1v1h-1zM825 303h1v1h-1zM828 303h4v1h-4zM834 303h1v1h-1zM836 303h2v1h-2zM839 303h1v1h-1zM666 304h2v1h-2zM673 304h1v1h-1zM676 304h1v1h-1zM678 304h2v1h-2zM682 304h1v1h-1zM684 304h15v1h-15zM700 304h4v1h-4zM707 304h3v1h-3zM712 304h2v1h-2zM715 304h2v1h-2zM718 304h4v1h-4zM723 304h7v1h-7zM731 304h7v1h-7zM739 304h7v1h-7zM747 304h8v1h-8zM756 304h7v1h-7zM766 304h1v1h-1zM770 304h2v1h-2zM775 304h1v1h-1zM790 304h3v1h-3zM796 304h3v1h-3zM802 304h2v1h-2zM806 304h4v1h-4zM818 304h3v1h-3zM824 304h1v1h-1zM829 304h2v1h-2zM835 304h2v1h-2zM676 305h1v1h-1zM682 305h1v1h-1zM685 305h1v1h-1zM690 305h1v1h-1zM692 305h5v1h-5zM698 305h1v1h-1zM700 305h1v1h-1zM702 305h1v1h-1zM707 305h3v1h-3zM712 305h1v1h-1zM715 305h2v1h-2zM723 305h7v1h-7zM731 305h7v1h-7zM740 305h1v1h-1zM745 305h1v1h-1zM748 305h7v1h-7zM756 305h1v1h-1zM758 305h2v1h-2zM762 305h1v1h-1zM805 490h2v1h-2zM810 490h1v1h-1zM814 490h1v1h-1zM818 490h1v1h-1zM805 491h2v1h-2zM809 491h2v1h-2zM814 491h5v1h-5zM804 492h18v1h-18zM804 493h15v1h-15zM820 493h2v1h-2zM805 494h2v1h-2zM808 494h1v1h-1zM811 494h1v1h-1zM814 494h5v1h-5zM820 494h2v1h-2zM805 495h7v1h-7zM814 495h2v1h-2zM817 495h5v1h-5zM804 496h3v1h-3zM808 496h4v1h-4zM813 496h9v1h-9zM805 497h2v1h-2zM808 497h4v1h-4zM814 497h2v1h-2zM817 497h5v1h-5zM805 498h2v1h-2zM808 498h4v1h-4zM814 498h4v1h-4zM819 498h2v1h-2zM805 499h8v1h-8zM814 499h3v1h-3zM819 499h2v1h-2zM805 500h1v1h-1zM814 500h1v1h-1zM819 500h2v1h-2zM795 502h1v1h-1zM800 502h1v1h-1zM795 503h8v1h-8zM794 504h8v1h-8zM794 505h3v1h-3zM798 505h4v1h-4zM795 506h8v1h-8zM795 507h2v1h-2zM798 507h5v1h-5zM794 508h9v1h-9zM795 509h2v1h-2zM798 509h5v1h-5zM795 510h8v1h-8zM795 511h4v1h-4zM801 511h2v1h-2zM795 512h1v1h-1zM798 512h1v1h-1zM800 512h2v1h-2zM814 513h1v1h-1zM805 514h2v1h-2zM808 514h5v1h-5zM814 514h8v1h-8zM805 515h17v1h-17zM804 516h13v1h-13zM819 516h2v1h-2zM804 517h8v1h-8zM814 517h3v1h-3zM819 517h2v1h-2zM804 518h8v1h-8zM814 518h2v1h-2zM819 518h2v1h-2zM804 519h3v1h-3zM809 519h3v1h-3zM813 519h4v1h-4zM819 519h2v1h-2zM805 520h8v1h-8zM814 520h2v1h-2zM819 520h2v1h-2zM805 521h7v1h-7zM814 521h3v1h-3zM819 521h2v1h-2zM804 522h9v1h-9zM814 522h3v1h-3zM818 522h3v1h-3zM808 523h3v1h-3zM818 523h2v1h-2zM805 525h2v1h-2zM808 525h5v1h-5zM815 525h6v1h-6zM805 526h8v1h-8zM815 526h1v1h-1zM817 526h1v1h-1zM819 526h2v1h-2zM804 527h9v1h-9zM814 527h2v1h-2zM817 527h4v1h-4zM804 528h8v1h-8zM813 528h9v1h-9zM804 529h8v1h-8zM813 529h9v1h-9zM804 530h3v1h-3zM809 530h3v1h-3zM814 530h4v1h-4zM819 530h2v1h-2zM805 531h8v1h-8zM814 531h7v1h-7zM805 532h7v1h-7zM814 532h8v1h-8zM804 533h9v1h-9zM814 533h1v1h-1zM818 533h2v1h-2zM808 534h3v1h-3zM818 534h2v1h-2zM810 536h1v1h-1zM813 536h1v1h-1zM801 537h7v1h-7zM809 537h7v1h-7zM818 537h8v1h-8zM801 538h6v1h-6zM809 538h7v1h-7zM818 538h1v1h-1zM820 538h2v1h-2zM823 538h3v1h-3zM801 539h2v1h-2zM804 539h1v1h-1zM806 539h1v1h-1zM809 539h5v1h-5zM815 539h1v1h-1zM818 539h8v1h-8zM802 540h1v1h-1zM804 540h1v1h-1zM806 540h1v1h-1zM809 540h7v1h-7zM818 540h8v1h-8zM802 541h3v1h-3zM806 541h1v1h-1zM809 541h2v1h-2zM812 541h5v1h-5zM818 541h8v1h-8zM800 542h8v1h-8zM809 542h2v1h-2zM812 542h1v1h-1zM816 542h1v1h-1zM818 542h8v1h-8zM803 543h2v1h-2zM810 543h6v1h-6zM818 543h1v1h-1zM820 543h6v1h-6zM804 544h1v1h-1zM810 544h6v1h-6zM818 544h1v1h-1zM820 544h6v1h-6zM804 545h1v1h-1zM809 545h8v1h-8zM818 545h8v1h-8zM804 546h1v1h-1zM809 546h8v1h-8zM818 546h7v1h-7zM808 547h1v1h-1zM811 547h1v1h-1zM814 547h2v1h-2zM818 547h1v1h-1zM804 548h3v1h-3zM808 548h4v1h-4zM813 548h9v1h-9zM806 549h1v1h-1zM808 549h4v1h-4zM814 549h6v1h-6zM805 550h8v1h-8zM814 550h7v1h-7zM804 551h9v1h-9zM815 551h5v1h-5zM804 552h2v1h-2zM807 552h15v1h-15zM804 553h9v1h-9zM814 553h7v1h-7zM806 554h6v1h-6zM814 554h7v1h-7zM806 555h7v1h-7zM814 555h7v1h-7zM805 556h2v1h-2zM809 556h2v1h-2zM814 556h3v1h-3zM818 556h3v1h-3zM805 557h1v1h-1zM809 557h2v1h-2zM814 557h2v1h-2zM819 557h2v1h-2zM805 559h1v1h-1zM810 559h1v1h-1zM814 559h1v1h-1zM818 559h1v1h-1zM805 560h8v1h-8zM814 560h2v1h-2zM818 560h1v1h-1zM804 561h8v1h-8zM814 561h7v1h-7zM804 562h3v1h-3zM808 562h4v1h-4zM813 562h8v1h-8zM805 563h8v1h-8zM814 563h2v1h-2zM818 563h1v1h-1zM820 563h1v1h-1zM805 564h2v1h-2zM808 564h5v1h-5zM814 564h8v1h-8zM804 565h9v1h-9zM814 565h7v1h-7zM805 566h2v1h-2zM808 566h8v1h-8zM817 566h3v1h-3zM805 567h10v1h-10zM817 567h1v1h-1zM819 567h2v1h-2zM805 568h4v1h-4zM811 568h2v1h-2zM816 568h2v1h-2zM819 568h3v1h-3zM805 569h1v1h-1zM808 569h1v1h-1zM810 569h2v1h-2zM816 569h1v1h-1zM820 569h1v1h-1zM808 570h1v1h-1zM817 570h1v1h-1zM805 571h7v1h-7zM814 571h8v1h-8zM804 572h8v1h-8zM814 572h8v1h-8zM808 573h1v1h-1zM814 573h1v1h-1zM816 573h3v1h-3zM820 573h1v1h-1zM805 574h6v1h-6zM814 574h1v1h-1zM816 574h5v1h-5zM805 575h7v1h-7zM814 575h8v1h-8zM806 576h2v1h-2zM809 576h2v1h-2zM814 576h2v1h-2zM817 576h3v1h-3zM806 577h5v1h-5zM814 577h7v1h-7zM807 578h3v1h-3zM813 578h2v1h-2zM816 578h5v1h-5zM804 579h18v1h-18zM805 580h2v1h-2zM810 580h2v1h-2zM815 580h7v1h-7zM805 582h1v1h-1zM814 582h1v1h-1zM818 582h1v1h-1zM805 583h7v1h-7zM814 583h2v1h-2zM818 583h1v1h-1zM807 584h5v1h-5zM814 584h7v1h-7zM807 585h5v1h-5zM813 585h8v1h-8zM804 586h9v1h-9zM814 586h2v1h-2zM818 586h1v1h-1zM820 586h1v1h-1zM807 587h6v1h-6zM814 587h8v1h-8zM807 588h5v1h-5zM814 588h7v1h-7zM805 589h7v1h-7zM813 589h3v1h-3zM817 589h3v1h-3zM805 590h7v1h-7zM813 590h2v1h-2zM817 590h1v1h-1zM819 590h2v1h-2zM805 591h1v1h-1zM807 591h2v1h-2zM810 591h2v1h-2zM816 591h2v1h-2zM819 591h3v1h-3zM805 592h1v1h-1zM807 592h2v1h-2zM810 592h2v1h-2zM816 592h1v1h-1zM820 592h1v1h-1zM795 594h1v1h-1zM800 594h1v1h-1zM795 595h8v1h-8zM794 596h8v1h-8zM794 597h3v1h-3zM798 597h4v1h-4zM795 598h8v1h-8zM795 599h2v1h-2zM798 599h5v1h-5zM794 600h9v1h-9zM795 601h2v1h-2zM798 601h5v1h-5zM795 602h8v1h-8zM795 603h4v1h-4zM801 603h2v1h-2zM795 604h1v1h-1zM798 604h1v1h-1zM800 604h2v1h-2zM809 605h2v1h-2zM814 605h2v1h-2zM805 606h7v1h-7zM814 606h8v1h-8zM807 607h2v1h-2zM813 607h3v1h-3zM818 607h2v1h-2zM805 608h7v1h-7zM813 608h9v1h-9zM805 609h7v1h-7zM814 609h2v1h-2zM817 609h5v1h-5zM808 610h1v1h-1zM814 610h8v1h-8zM804 611h9v1h-9zM814 611h8v1h-8zM805 612h7v1h-7zM813 612h3v1h-3zM817 612h5v1h-5zM808 613h1v1h-1zM814 613h2v1h-2zM817 613h1v1h-1zM820 613h2v1h-2zM806 614h3v1h-3zM814 614h2v1h-2zM817 614h1v1h-1zM820 614h2v1h-2zM806 615h3v1h-3zM814 615h2v1h-2zM817 615h1v1h-1zM819 615h2v1h-2zM680 617h1v1h-1zM677 618h7v1h-7zM686 618h6v1h-6zM677 619h7v1h-7zM686 619h2v1h-2zM690 619h2v1h-2zM677 620h7v1h-7zM686 620h6v1h-6zM677 621h6v1h-6zM686 621h6v1h-6zM677 622h1v1h-1zM679 622h4v1h-4zM686 622h5v1h-5zM677 623h1v1h-1zM679 623h4v1h-4zM685 623h8v1h-8zM677 624h1v1h-1zM679 624h4v1h-4zM685 624h7v1h-7zM677 625h7v1h-7zM686 625h6v1h-6zM677 626h1v1h-1zM680 626h4v1h-4zM686 626h6v1h-6zM677 627h1v1h-1zM680 627h4v1h-4zM686 627h1v1h-1zM690 627h2v1h-2zM676 628h2v1h-2zM680 628h2v1h-2zM690 628h1v1h-1zM676 629h2v1h-2zM679 629h3v1h-3zM688 629h3v1h-3zM679 630h2v1h-2zM689 630h1v1h-1zM710 619h1v1h-1zM713 619h1v1h-1zM715 619h1v1h-1zM710 620h2v1h-2zM713 620h1v1h-1zM715 620h1v1h-1zM710 621h1v1h-1zM713 621h1v1h-1zM715 621h1v1h-1zM709 622h2v1h-2zM713 622h1v1h-1zM708 623h9v1h-9zM708 624h8v1h-8zM708 625h3v1h-3zM713 625h1v1h-1zM709 626h2v1h-2zM713 626h1v1h-1zM709 627h2v1h-2zM713 627h2v1h-2zM709 628h2v1h-2zM713 628h2v1h-2zM716 628h1v1h-1zM709 629h2v1h-2zM714 629h3v1h-3zM709 630h2v1h-2zM714 630h3v1h-3zM710 631h1v1h-1zM715 631h1v1h-1zM734 619h5v1h-5zM733 620h7v1h-7zM733 621h2v1h-2zM738 621h2v1h-2zM733 622h7v1h-7zM733 623h7v1h-7zM733 624h7v1h-7zM732 625h9v1h-9zM734 626h5v1h-5zM734 627h6v1h-6zM733 628h7v1h-7zM738 629h1v1h-1zM736 630h3v1h-3zM736 631h2v1h-2zM785 619h1v1h-1zM784 620h4v1h-4zM784 621h5v1h-5zM783 622h2v1h-2zM787 622h2v1h-2zM782 623h4v1h-4zM787 623h1v1h-1zM784 624h4v1h-4zM785 625h5v1h-5zM784 626h6v1h-6zM782 627h4v1h-4zM788 627h2v1h-2zM782 628h4v1h-4zM789 628h1v1h-1zM785 629h5v1h-5zM785 630h5v1h-5zM785 631h1v1h-1zM789 631h1v1h-1zM831 619h1v1h-1zM826 620h4v1h-4zM831 620h1v1h-1zM827 621h2v1h-2zM830 621h6v1h-6zM828 622h1v1h-1zM830 622h6v1h-6zM826 623h5v1h-5zM832 623h2v1h-2zM826 624h5v1h-5zM832 624h2v1h-2zM827 625h3v1h-3zM831 625h4v1h-4zM827 626h9v1h-9zM826 627h10v1h-10zM826 628h3v1h-3zM830 628h1v1h-1zM832 628h4v1h-4zM828 629h1v1h-1zM832 629h2v1h-2zM828 630h1v1h-1zM831 630h3v1h-3zM828 631h1v1h-1zM832 631h1v1h-1zM878 618h1v1h-1zM881 618h2v1h-2zM877 619h6v1h-6zM886 619h7v1h-7zM876 620h7v1h-7zM886 620h7v1h-7zM876 621h9v1h-9zM886 621h7v1h-7zM877 622h8v1h-8zM886 622h7v1h-7zM876 623h8v1h-8zM885 623h9v1h-9zM876 624h3v1h-3zM880 624h4v1h-4zM886 624h7v1h-7zM877 625h7v1h-7zM886 625h7v1h-7zM876 626h8v1h-8zM886 626h7v1h-7zM877 627h3v1h-3zM882 627h2v1h-2zM886 627h7v1h-7zM876 628h4v1h-4zM881 628h3v1h-3zM886 628h7v1h-7zM877 629h8v1h-8zM886 629h7v1h-7zM876 630h6v1h-6zM883 630h11v1h-11zM877 631h1v1h-1zM920 619h2v1h-2zM919 620h6v1h-6zM918 621h7v1h-7zM918 622h6v1h-6zM919 623h6v1h-6zM917 624h10v1h-10zM918 625h8v1h-8zM918 626h8v1h-8zM918 627h8v1h-8zM918 628h8v1h-8zM918 629h8v1h-8zM918 630h8v1h-8zM943 619h1v1h-1zM947 619h1v1h-1zM942 620h3v1h-3zM946 620h3v1h-3zM943 621h1v1h-1zM947 621h3v1h-3zM945 622h7v1h-7zM941 623h3v1h-3zM945 623h6v1h-6zM942 624h2v1h-2zM947 624h2v1h-2zM946 625h5v1h-5zM943 626h8v1h-8zM943 627h2v1h-2zM947 627h2v1h-2zM942 628h2v1h-2zM947 628h2v1h-2zM942 629h2v1h-2zM945 629h7v1h-7zM945 630h6v1h-6zM694 633h2v1h-2zM681 634h2v1h-2zM684 634h4v1h-4zM690 634h2v1h-2zM694 634h2v1h-2zM681 635h2v1h-2zM684 635h4v1h-4zM691 635h1v1h-1zM694 635h2v1h-2zM684 636h1v1h-1zM686 636h2v1h-2zM694 636h2v1h-2zM680 637h5v1h-5zM686 637h12v1h-12zM680 638h8v1h-8zM689 638h9v1h-9zM681 639h7v1h-7zM690 639h2v1h-2zM694 639h2v1h-2zM681 640h2v1h-2zM684 640h1v1h-1zM686 640h2v1h-2zM690 640h2v1h-2zM694 640h2v1h-2zM681 641h7v1h-7zM690 641h3v1h-3zM694 641h2v1h-2zM681 642h2v1h-2zM684 642h3v1h-3zM690 642h3v1h-3zM694 642h2v1h-2zM681 643h8v1h-8zM690 643h2v1h-2zM694 643h2v1h-2zM683 644h1v1h-1zM687 644h1v1h-1zM694 644h2v1h-2zM681 645h2v1h-2zM686 645h1v1h-1zM690 645h2v1h-2zM695 645h1v1h-1zM681 646h2v1h-2zM685 646h2v1h-2zM690 646h2v1h-2zM694 646h2v1h-2zM681 647h8v1h-8zM690 647h8v1h-8zM680 648h8v1h-8zM689 648h8v1h-8zM681 649h2v1h-2zM684 649h2v1h-2zM687 649h1v1h-1zM690 649h2v1h-2zM693 649h2v1h-2zM696 649h1v1h-1zM681 650h4v1h-4zM687 650h2v1h-2zM690 650h2v1h-2zM693 650h4v1h-4zM681 651h7v1h-7zM690 651h6v1h-6zM680 652h4v1h-4zM685 652h3v1h-3zM689 652h6v1h-6zM696 652h2v1h-2zM680 653h3v1h-3zM685 653h2v1h-2zM689 653h3v1h-3zM693 653h1v1h-1zM695 653h2v1h-2zM681 654h2v1h-2zM685 654h3v1h-3zM690 654h2v1h-2zM694 654h3v1h-3zM681 655h8v1h-8zM690 655h8v1h-8zM681 656h2v1h-2zM684 656h1v1h-1zM687 656h1v1h-1zM690 656h2v1h-2zM693 656h1v1h-1zM696 656h1v1h-1zM684 657h1v1h-1zM690 657h2v1h-2zM695 657h1v1h-1zM681 658h7v1h-7zM690 658h2v1h-2zM694 658h2v1h-2zM680 659h9v1h-9zM690 659h8v1h-8zM681 660h1v1h-1zM684 660h1v1h-1zM687 660h1v1h-1zM689 660h8v1h-8zM681 661h7v1h-7zM690 661h2v1h-2zM693 661h2v1h-2zM696 661h1v1h-1zM681 662h7v1h-7zM690 662h2v1h-2zM693 662h4v1h-4zM681 663h7v1h-7zM690 663h6v1h-6zM681 664h7v1h-7zM689 664h6v1h-6zM696 664h2v1h-2zM681 665h7v1h-7zM689 665h3v1h-3zM693 665h1v1h-1zM695 665h2v1h-2zM681 666h7v1h-7zM690 666h2v1h-2zM694 666h3v1h-3zM681 667h1v1h-1zM684 667h1v1h-1zM690 667h8v1h-8zM684 668h1v1h-1zM690 668h2v1h-2zM693 668h1v1h-1zM696 668h1v1h-1zM684 670h2v1h-2zM680 671h3v1h-3zM684 671h5v1h-5zM690 671h2v1h-2zM693 671h4v1h-4zM681 672h7v1h-7zM690 672h2v1h-2zM693 672h4v1h-4zM681 673h1v1h-1zM683 673h5v1h-5zM690 673h7v1h-7zM681 674h1v1h-1zM683 674h5v1h-5zM689 674h3v1h-3zM693 674h5v1h-5zM680 675h9v1h-9zM690 675h2v1h-2zM693 675h5v1h-5zM681 676h8v1h-8zM690 676h2v1h-2zM693 676h2v1h-2zM696 676h1v1h-1zM681 677h1v1h-1zM683 677h5v1h-5zM689 677h3v1h-3zM693 677h4v1h-4zM681 678h2v1h-2zM684 678h4v1h-4zM689 678h1v1h-1zM691 678h6v1h-6zM680 679h3v1h-3zM684 679h1v1h-1zM686 679h2v1h-2zM690 679h7v1h-7zM680 680h2v1h-2zM683 680h15v1h-15zM683 681h1v1h-1zM686 681h2v1h-2zM692 681h1v1h-1zM694 681h1v1h-1zM715 670h1v1h-1zM726 670h1v1h-1zM715 671h1v1h-1zM717 671h4v1h-4zM726 671h1v1h-1zM714 672h7v1h-7zM723 672h7v1h-7zM705 673h3v1h-3zM712 673h9v1h-9zM722 673h9v1h-9zM735 673h2v1h-2zM704 674h1v1h-1zM707 674h1v1h-1zM711 674h2v1h-2zM714 674h2v1h-2zM717 674h4v1h-4zM725 674h3v1h-3zM735 674h2v1h-2zM703 675h2v1h-2zM707 675h1v1h-1zM710 675h1v1h-1zM712 675h1v1h-1zM714 675h7v1h-7zM724 675h5v1h-5zM734 675h2v1h-2zM703 676h1v1h-1zM707 676h1v1h-1zM710 676h1v1h-1zM712 676h1v1h-1zM714 676h7v1h-7zM723 676h7v1h-7zM733 676h1v1h-1zM735 676h1v1h-1zM703 677h1v1h-1zM707 677h1v1h-1zM709 677h1v1h-1zM712 677h4v1h-4zM717 677h1v1h-1zM719 677h2v1h-2zM723 677h8v1h-8zM732 677h1v1h-1zM735 677h1v1h-1zM703 678h1v1h-1zM706 678h10v1h-10zM717 678h1v1h-1zM719 678h12v1h-12zM732 678h5v1h-5zM703 679h1v1h-1zM706 679h1v1h-1zM711 679h1v1h-1zM715 679h3v1h-3zM719 679h3v1h-3zM726 679h1v1h-1zM735 679h1v1h-1zM703 680h3v1h-3zM711 680h1v1h-1zM715 680h1v1h-1zM720 680h2v1h-2zM726 680h1v1h-1zM746 670h1v1h-1zM741 671h4v1h-4zM746 671h1v1h-1zM750 671h6v1h-6zM740 672h8v1h-8zM750 672h1v1h-1zM754 672h2v1h-2zM740 673h8v1h-8zM750 673h6v1h-6zM740 674h6v1h-6zM747 674h1v1h-1zM750 674h6v1h-6zM742 675h5v1h-5zM749 675h8v1h-8zM744 676h2v1h-2zM749 676h7v1h-7zM740 677h8v1h-8zM750 677h6v1h-6zM740 678h8v1h-8zM750 678h6v1h-6zM744 679h1v1h-1zM754 679h2v1h-2zM742 680h3v1h-3zM752 680h3v1h-3zM742 681h2v1h-2zM752 681h3v1h-3zM796 653h1v1h-1zM799 653h1v1h-1zM805 653h1v1h-1zM811 653h1v1h-1zM795 654h2v1h-2zM799 654h2v1h-2zM805 654h5v1h-5zM811 654h2v1h-2zM795 655h2v1h-2zM799 655h2v1h-2zM805 655h8v1h-8zM795 656h2v1h-2zM799 656h2v1h-2zM804 656h2v1h-2zM807 656h1v1h-1zM810 656h3v1h-3zM795 657h8v1h-8zM804 657h2v1h-2zM807 657h6v1h-6zM795 658h8v1h-8zM804 658h9v1h-9zM795 659h2v1h-2zM799 659h2v1h-2zM804 659h9v1h-9zM795 660h2v1h-2zM799 660h2v1h-2zM804 660h9v1h-9zM795 661h2v1h-2zM799 661h2v1h-2zM805 661h8v1h-8zM795 662h2v1h-2zM799 662h2v1h-2zM802 662h1v1h-1zM805 662h1v1h-1zM807 662h2v1h-2zM810 662h3v1h-3zM795 663h6v1h-6zM802 663h1v1h-1zM805 663h1v1h-1zM807 663h2v1h-2zM811 663h2v1h-2zM794 664h9v1h-9zM805 664h3v1h-3zM811 664h2v1h-2zM794 665h4v1h-4zM799 665h4v1h-4zM805 665h3v1h-3zM810 665h2v1h-2zM800 666h2v1h-2zM805 666h1v1h-1zM810 666h2v1h-2zM907 654h2v1h-2zM911 654h1v1h-1zM917 654h1v1h-1zM919 654h3v1h-3zM925 654h1v1h-1zM934 654h1v1h-1zM937 654h1v1h-1zM907 655h2v1h-2zM911 655h2v1h-2zM915 655h8v1h-8zM925 655h1v1h-1zM928 655h3v1h-3zM934 655h1v1h-1zM936 655h2v1h-2zM907 656h2v1h-2zM910 656h4v1h-4zM915 656h3v1h-3zM919 656h3v1h-3zM925 656h1v1h-1zM928 656h3v1h-3zM933 656h2v1h-2zM936 656h5v1h-5zM906 657h8v1h-8zM915 657h3v1h-3zM919 657h3v1h-3zM924 657h5v1h-5zM930 657h1v1h-1zM932 657h9v1h-9zM907 658h2v1h-2zM910 658h1v1h-1zM912 658h2v1h-2zM915 658h8v1h-8zM924 658h5v1h-5zM930 658h1v1h-1zM933 658h4v1h-4zM939 658h2v1h-2zM907 659h2v1h-2zM910 659h1v1h-1zM912 659h2v1h-2zM917 659h3v1h-3zM921 659h2v1h-2zM925 659h2v1h-2zM928 659h1v1h-1zM930 659h1v1h-1zM933 659h2v1h-2zM936 659h2v1h-2zM939 659h2v1h-2zM907 660h4v1h-4zM912 660h2v1h-2zM916 660h5v1h-5zM924 660h3v1h-3zM928 660h1v1h-1zM930 660h1v1h-1zM933 660h5v1h-5zM939 660h2v1h-2zM906 661h3v1h-3zM910 661h4v1h-4zM916 661h6v1h-6zM924 661h5v1h-5zM930 661h1v1h-1zM933 661h8v1h-8zM907 662h2v1h-2zM910 662h3v1h-3zM916 662h7v1h-7zM924 662h5v1h-5zM930 662h1v1h-1zM932 662h3v1h-3zM936 662h5v1h-5zM907 663h2v1h-2zM910 663h3v1h-3zM916 663h7v1h-7zM924 663h2v1h-2zM927 663h2v1h-2zM930 663h5v1h-5zM936 663h4v1h-4zM907 664h7v1h-7zM916 664h2v1h-2zM919 664h3v1h-3zM925 664h1v1h-1zM927 664h1v1h-1zM930 664h2v1h-2zM934 664h1v1h-1zM939 664h1v1h-1zM906 665h14v1h-14zM921 665h2v1h-2zM925 665h3v1h-3zM930 665h2v1h-2zM934 665h1v1h-1zM938 665h2v1h-2zM907 666h1v1h-1zM918 666h1v1h-1zM925 666h1v1h-1zM930 666h2v1h-2zM934 666h1v1h-1zM938 666h1v1h-1zM798 670h1v1h-1zM801 670h1v1h-1zM797 671h2v1h-2zM801 671h2v1h-2zM796 672h8v1h-8zM796 673h8v1h-8zM797 674h2v1h-2zM801 674h2v1h-2zM797 675h2v1h-2zM801 675h2v1h-2zM795 676h10v1h-10zM797 677h2v1h-2zM801 677h2v1h-2zM797 678h2v1h-2zM801 678h2v1h-2zM796 679h2v1h-2zM802 679h2v1h-2zM796 680h1v1h-1zM803 680h1v1h-1zM826 670h3v1h-3zM830 670h1v1h-1zM826 671h3v1h-3zM830 671h1v1h-1zM833 671h1v1h-1zM827 672h2v1h-2zM830 672h1v1h-1zM832 672h2v1h-2zM826 673h3v1h-3zM830 673h3v1h-3zM826 674h9v1h-9zM826 675h1v1h-1zM829 675h6v1h-6zM826 676h3v1h-3zM830 676h1v1h-1zM832 676h1v1h-1zM827 677h2v1h-2zM830 677h1v1h-1zM832 677h2v1h-2zM827 678h2v1h-2zM830 678h4v1h-4zM826 679h6v1h-6zM833 679h2v1h-2zM826 680h2v1h-2zM829 680h2v1h-2zM845 670h2v1h-2zM850 670h1v1h-1zM845 671h9v1h-9zM844 672h9v1h-9zM845 673h8v1h-8zM845 674h8v1h-8zM845 675h8v1h-8zM845 676h8v1h-8zM845 677h8v1h-8zM846 678h4v1h-4zM851 678h2v1h-2zM845 679h8v1h-8zM845 680h1v1h-1zM848 680h2v1h-2zM796 683h3v1h-3zM800 683h1v1h-1zM796 684h3v1h-3zM800 684h1v1h-1zM802 684h2v1h-2zM797 685h2v1h-2zM800 685h4v1h-4zM796 686h5v1h-5zM802 686h1v1h-1zM796 687h1v1h-1zM799 687h6v1h-6zM796 688h7v1h-7zM796 689h3v1h-3zM800 689h1v1h-1zM802 689h1v1h-1zM797 690h2v1h-2zM800 690h4v1h-4zM797 691h5v1h-5zM803 691h2v1h-2zM796 692h2v1h-2zM799 692h2v1h-2zM82 694h4v1h-4zM88 694h3v1h-3zM94 694h1v1h-1zM79 695h2v1h-2zM82 695h4v1h-4zM88 695h4v1h-4zM94 695h1v1h-1zM79 696h2v1h-2zM82 696h1v1h-1zM85 696h1v1h-1zM88 696h1v1h-1zM90 696h1v1h-1zM94 696h1v1h-1zM79 697h3v1h-3zM85 697h1v1h-1zM88 697h1v1h-1zM90 697h1v1h-1zM94 697h1v1h-1zM79 698h1v1h-1zM82 698h4v1h-4zM91 698h1v1h-1z" fill="#ffffff"/><path d="M115 694h1v1h-1zM122 694h1v1h-1zM128 694h1v1h-1zM114 695h4v1h-4zM122 695h1v1h-1zM127 695h2v1h-2zM132 695h1v1h-1zM114 696h1v1h-1zM122 696h1v1h-1zM131 696h2v1h-2zM113 697h7v1h-7zM122 697h7v1h-7zM132 697h1v1h-1zM112 698h1v1h-1zM114 698h1v1h-1zM119 698h1v1h-1zM122 698h1v1h-1zM124 698h3v1h-3zM128 698h1v1h-1zM132 698h1v1h-1z" fill="#303030"/>
</svg>
</body></html>
